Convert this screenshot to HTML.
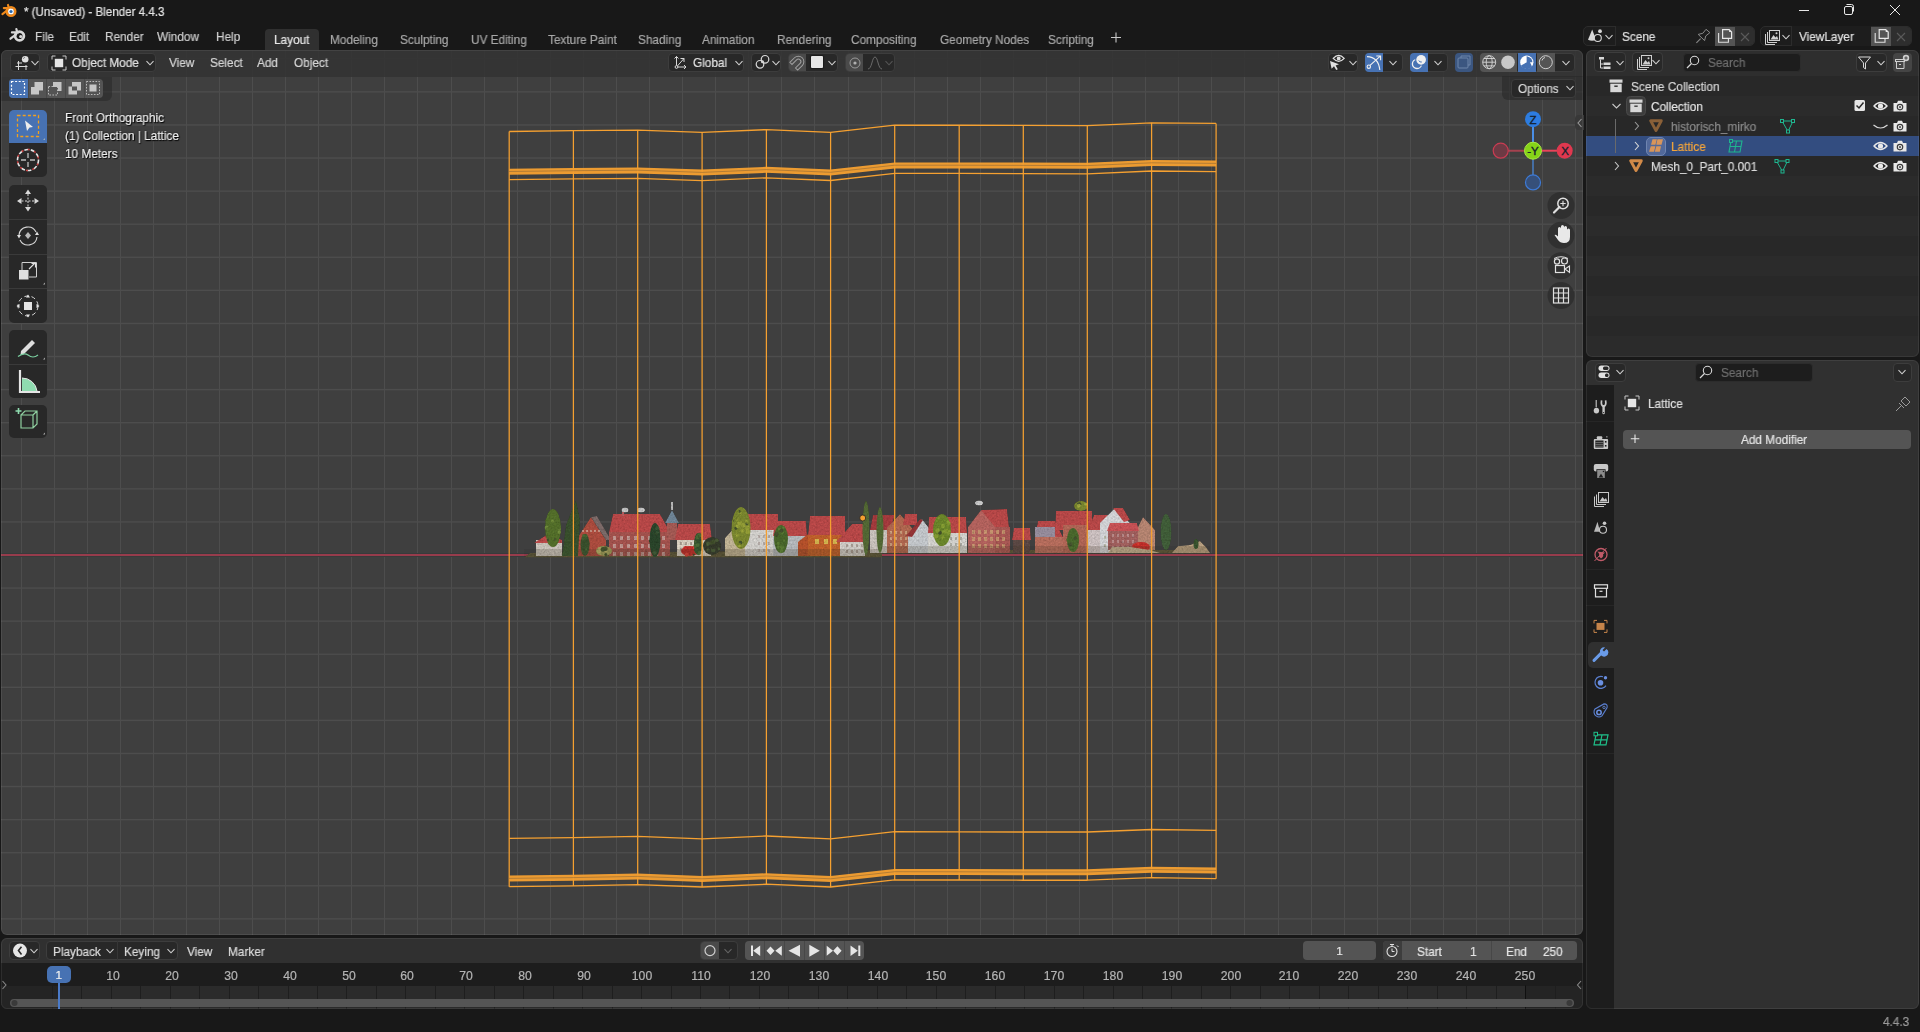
<!DOCTYPE html><html><head><meta charset="utf-8"><style>
*{box-sizing:border-box}
body{margin:0;width:1920px;height:1032px;background:#181818;position:relative;overflow:hidden;font-family:"Liberation Sans",sans-serif}
.a{position:absolute}
.t{position:absolute;white-space:pre;line-height:1;-webkit-text-stroke:0.2px currentColor;will-change:transform}
svg{position:absolute;overflow:visible}
</style></head><body>
<div class="a" style="left:1px;top:50px;width:1582px;height:885px;background:#3f3f3f;border-radius:6px;overflow:hidden">
<svg width="1582" height="885" style="left:0;top:0" fill="#4d4d4d"><rect x="20" y="0" width="1" height="885"/><rect x="53" y="0" width="1" height="885"/><rect x="86" y="0" width="1" height="885"/><rect x="119" y="0" width="1" height="885"/><rect x="152" y="0" width="1" height="885"/><rect x="185" y="0" width="1" height="885"/><rect x="218" y="0" width="1" height="885"/><rect x="251" y="0" width="1" height="885"/><rect x="284" y="0" width="1" height="885"/><rect x="317" y="0" width="1" height="885"/><rect x="350" y="0" width="1" height="885"/><rect x="383" y="0" width="1" height="885"/><rect x="416" y="0" width="1" height="885"/><rect x="450" y="0" width="1" height="885"/><rect x="483" y="0" width="1" height="885"/><rect x="516" y="0" width="1" height="885"/><rect x="549" y="0" width="1" height="885"/><rect x="582" y="0" width="1" height="885"/><rect x="615" y="0" width="1" height="885"/><rect x="648" y="0" width="1" height="885"/><rect x="681" y="0" width="1" height="885"/><rect x="714" y="0" width="1" height="885"/><rect x="747" y="0" width="1" height="885"/><rect x="780" y="0" width="1" height="885"/><rect x="813" y="0" width="1" height="885"/><rect x="847" y="0" width="1" height="885"/><rect x="880" y="0" width="1" height="885"/><rect x="913" y="0" width="1" height="885"/><rect x="946" y="0" width="1" height="885"/><rect x="979" y="0" width="1" height="885"/><rect x="1012" y="0" width="1" height="885"/><rect x="1045" y="0" width="1" height="885"/><rect x="1078" y="0" width="1" height="885"/><rect x="1111" y="0" width="1" height="885"/><rect x="1144" y="0" width="1" height="885"/><rect x="1177" y="0" width="1" height="885"/><rect x="1210" y="0" width="1" height="885"/><rect x="1243" y="0" width="1" height="885"/><rect x="1277" y="0" width="1" height="885"/><rect x="1310" y="0" width="1" height="885"/><rect x="1343" y="0" width="1" height="885"/><rect x="1376" y="0" width="1" height="885"/><rect x="1409" y="0" width="1" height="885"/><rect x="1442" y="0" width="1" height="885"/><rect x="1475" y="0" width="1" height="885"/><rect x="1508" y="0" width="1" height="885"/><rect x="1541" y="0" width="1" height="885"/><rect x="1574" y="0" width="1" height="885"/><rect x="0" y="8.10" width="1582" height="1.4"/><rect x="0" y="41.18" width="1582" height="1.4"/><rect x="0" y="74.26" width="1582" height="1.4"/><rect x="0" y="107.34" width="1582" height="1.4"/><rect x="0" y="140.42" width="1582" height="1.4"/><rect x="0" y="173.50" width="1582" height="1.4"/><rect x="0" y="206.58" width="1582" height="1.4"/><rect x="0" y="239.66" width="1582" height="1.4"/><rect x="0" y="272.74" width="1582" height="1.4"/><rect x="0" y="305.82" width="1582" height="1.4"/><rect x="0" y="338.90" width="1582" height="1.4"/><rect x="0" y="371.98" width="1582" height="1.4"/><rect x="0" y="405.06" width="1582" height="1.4"/><rect x="0" y="438.14" width="1582" height="1.4"/><rect x="0" y="471.22" width="1582" height="1.4"/><rect x="0" y="504.30" width="1582" height="1.4"/><rect x="0" y="537.38" width="1582" height="1.4"/><rect x="0" y="570.46" width="1582" height="1.4"/><rect x="0" y="603.54" width="1582" height="1.4"/><rect x="0" y="636.62" width="1582" height="1.4"/><rect x="0" y="669.70" width="1582" height="1.4"/><rect x="0" y="702.78" width="1582" height="1.4"/><rect x="0" y="735.86" width="1582" height="1.4"/><rect x="0" y="768.94" width="1582" height="1.4"/><rect x="0" y="802.02" width="1582" height="1.4"/><rect x="0" y="835.10" width="1582" height="1.4"/><rect x="0" y="868.18" width="1582" height="1.4"/></svg>
<div class="a" style="left:0;top:503px;width:1582px;height:4px;background:#383b3b"></div>
<div class="a" style="left:0;top:504px;width:1582px;height:2px;background:#973c4c"></div>
<svg width="1920" height="1032" style="left:-1px;top:-50px"><defs><filter id="vtex" x="500" y="480" width="740" height="90" filterUnits="userSpaceOnUse"><feTurbulence type="fractalNoise" baseFrequency="0.55" numOctaves="2" seed="7"/><feColorMatrix type="matrix" values="0.33 0.33 0.33 0 0 0.33 0.33 0.33 0 0 0.33 0.33 0.33 0 0 0 0 0 0 1" result="n"/><feComposite in="SourceGraphic" in2="n" operator="arithmetic" k1="1.15" k2="0.33" k3="0" k4="0" result="c"/><feComposite in="c" in2="SourceGraphic" operator="in" result="d"/><feGaussianBlur in="d" stdDeviation="0.5"/></filter></defs><g filter="url(#vtex)"><polygon fill="#5f5a3c" points="524,557.5 882,557.5 882,553.5 1210,553.5 1208,550 882,550 530,553"/><rect x="536" y="540" width="26" height="16" fill="#cfc8bf" fill-opacity="1"/><polygon fill="#bd4a4a" points="534,543 548,534 562,540 562,543"/><polygon fill="#b04e40" points="576,556 576,540 591,517 606,540 606,556"/><polygon fill="#7e6c6a" points="591,517 597,516 611,540 606,540"/><rect x="582" y="530" width="2" height="2" fill="#e0d0c0" fill-opacity="0.55"/><rect x="586" y="530" width="2" height="2" fill="#e0d0c0" fill-opacity="0.55"/><rect x="590" y="530" width="2" height="2" fill="#e0d0c0" fill-opacity="0.55"/><rect x="594" y="530" width="2" height="2" fill="#e0d0c0" fill-opacity="0.55"/><rect x="598" y="530" width="2" height="2" fill="#e0d0c0" fill-opacity="0.55"/><rect x="609" y="532" width="61" height="24" fill="#a85550" fill-opacity="1"/><polygon fill="#bd4a4a" points="609,532 613,514 660,514 670,532"/><rect x="613" y="536" width="3" height="4" fill="#d8d0c8" fill-opacity="0.55"/><rect x="620" y="536" width="3" height="4" fill="#d8d0c8" fill-opacity="0.55"/><rect x="627" y="536" width="3" height="4" fill="#d8d0c8" fill-opacity="0.55"/><rect x="634" y="536" width="3" height="4" fill="#d8d0c8" fill-opacity="0.55"/><rect x="641" y="536" width="3" height="4" fill="#d8d0c8" fill-opacity="0.55"/><rect x="648" y="536" width="3" height="4" fill="#d8d0c8" fill-opacity="0.55"/><rect x="655" y="536" width="3" height="4" fill="#d8d0c8" fill-opacity="0.55"/><rect x="662" y="536" width="3" height="4" fill="#d8d0c8" fill-opacity="0.55"/><rect x="613" y="544" width="3" height="4" fill="#d8d0c8" fill-opacity="0.55"/><rect x="620" y="544" width="3" height="4" fill="#d8d0c8" fill-opacity="0.55"/><rect x="627" y="544" width="3" height="4" fill="#d8d0c8" fill-opacity="0.55"/><rect x="634" y="544" width="3" height="4" fill="#d8d0c8" fill-opacity="0.55"/><rect x="641" y="544" width="3" height="4" fill="#d8d0c8" fill-opacity="0.55"/><rect x="648" y="544" width="3" height="4" fill="#d8d0c8" fill-opacity="0.55"/><rect x="655" y="544" width="3" height="4" fill="#d8d0c8" fill-opacity="0.55"/><rect x="662" y="544" width="3" height="4" fill="#d8d0c8" fill-opacity="0.55"/><rect x="613" y="552" width="3" height="4" fill="#d8d0c8" fill-opacity="0.55"/><rect x="620" y="552" width="3" height="4" fill="#d8d0c8" fill-opacity="0.55"/><rect x="627" y="552" width="3" height="4" fill="#d8d0c8" fill-opacity="0.55"/><rect x="634" y="552" width="3" height="4" fill="#d8d0c8" fill-opacity="0.55"/><rect x="641" y="552" width="3" height="4" fill="#d8d0c8" fill-opacity="0.55"/><rect x="648" y="552" width="3" height="4" fill="#d8d0c8" fill-opacity="0.55"/><rect x="655" y="552" width="3" height="4" fill="#d8d0c8" fill-opacity="0.55"/><rect x="662" y="552" width="3" height="4" fill="#d8d0c8" fill-opacity="0.55"/><ellipse cx="625" cy="510" rx="3.5" ry="2.5" fill="#c8c8c8" /><ellipse cx="641" cy="510" rx="4" ry="2.5" fill="#c8c8c8" /><rect x="622" y="512" width="2" height="4" fill="#b86060" fill-opacity="1"/><rect x="667" y="522" width="10" height="18" fill="#a85c56" fill-opacity="1"/><polygon fill="#71889a" points="665,523 672,510 679,523"/><rect x="671" y="502" width="2" height="8" fill="#bdbdbd" fill-opacity="1"/><rect x="677" y="538" width="34" height="18" fill="#dcd3c4" fill-opacity="1"/><polygon fill="#bd4a4a" points="675,540 678,524 710,524 712,540"/><rect x="680" y="542" width="2" height="3" fill="#8a7a70" fill-opacity="0.55"/><rect x="685" y="542" width="2" height="3" fill="#8a7a70" fill-opacity="0.55"/><rect x="690" y="542" width="2" height="3" fill="#8a7a70" fill-opacity="0.55"/><rect x="695" y="542" width="2" height="3" fill="#8a7a70" fill-opacity="0.55"/><rect x="700" y="542" width="2" height="3" fill="#8a7a70" fill-opacity="0.55"/><rect x="705" y="542" width="2" height="3" fill="#8a7a70" fill-opacity="0.55"/><rect x="680" y="548" width="2" height="3" fill="#8a7a70" fill-opacity="0.55"/><rect x="685" y="548" width="2" height="3" fill="#8a7a70" fill-opacity="0.55"/><rect x="690" y="548" width="2" height="3" fill="#8a7a70" fill-opacity="0.55"/><rect x="695" y="548" width="2" height="3" fill="#8a7a70" fill-opacity="0.55"/><rect x="700" y="548" width="2" height="3" fill="#8a7a70" fill-opacity="0.55"/><rect x="705" y="548" width="2" height="3" fill="#8a7a70" fill-opacity="0.55"/><ellipse cx="690" cy="551" rx="9" ry="5" fill="#c8302c" /><ellipse cx="691.9" cy="553.2" rx="2.113270991791975" ry="2.113270991791975" fill="#c8302c" /><ellipse cx="693.7" cy="554.8" rx="1.0406073195970607" ry="1.0406073195970607" fill="#44522e" /><ellipse cx="696.8" cy="552.3" rx="2.2612606884508715" ry="2.2612606884508715" fill="#e04438" /><ellipse cx="689.5" cy="548.7" rx="1.7612652029303026" ry="1.7612652029303026" fill="#c8302c" /><ellipse cx="686.6" cy="554.7" rx="2.0720156322807983" ry="2.0720156322807983" fill="#e04438" /><ellipse cx="694.5" cy="547.7" rx="1.8644335286525633" ry="1.8644335286525633" fill="#e04438" /><ellipse cx="685.6" cy="548.4" rx="2.375389552356295" ry="2.375389552356295" fill="#c8302c" /><polygon fill="#c4b698" points="725,556 725,538 735,527 758,538 758,556"/><rect x="745" y="530" width="33" height="26" fill="#d6d4d0" fill-opacity="1"/><polygon fill="#bd4a4a" points="745,530 748,514 778,514 778,530"/><rect x="758" y="535" width="2" height="3" fill="#9a8a86" fill-opacity="0.55"/><rect x="763" y="535" width="2" height="3" fill="#9a8a86" fill-opacity="0.55"/><rect x="768" y="535" width="2" height="3" fill="#9a8a86" fill-opacity="0.55"/><rect x="773" y="535" width="2" height="3" fill="#9a8a86" fill-opacity="0.55"/><rect x="758" y="542" width="2" height="3" fill="#9a8a86" fill-opacity="0.55"/><rect x="763" y="542" width="2" height="3" fill="#9a8a86" fill-opacity="0.55"/><rect x="768" y="542" width="2" height="3" fill="#9a8a86" fill-opacity="0.55"/><rect x="773" y="542" width="2" height="3" fill="#9a8a86" fill-opacity="0.55"/><rect x="758" y="549" width="2" height="3" fill="#9a8a86" fill-opacity="0.55"/><rect x="763" y="549" width="2" height="3" fill="#9a8a86" fill-opacity="0.55"/><rect x="768" y="549" width="2" height="3" fill="#9a8a86" fill-opacity="0.55"/><rect x="773" y="549" width="2" height="3" fill="#9a8a86" fill-opacity="0.55"/><rect x="773" y="536" width="34" height="20" fill="#b9bdc0" fill-opacity="1"/><polygon fill="#bd4a4a" points="773,536 775,521 806,521 807,536"/><polygon fill="#b8522c" points="798,556 798,542 808,534 817,542 817,556"/><rect x="808" y="535" width="37" height="21" fill="#c4622c" fill-opacity="1"/><polygon fill="#bd4a4a" points="808,535 810,516 845,516 845,535"/><rect x="815" y="539" width="4" height="5" fill="#d8b850" fill-opacity="1"/><rect x="824" y="539" width="4" height="5" fill="#d8b850" fill-opacity="1"/><rect x="833" y="539" width="4" height="5" fill="#d8b850" fill-opacity="1"/><rect x="840" y="538" width="25" height="18" fill="#d4d0ca" fill-opacity="1"/><polygon fill="#bd4a4a" points="836,542 852,524 866,524 866,542"/><rect x="846" y="544" width="2" height="3" fill="#8a7a70" fill-opacity="0.55"/><rect x="851" y="544" width="2" height="3" fill="#8a7a70" fill-opacity="0.55"/><rect x="856" y="544" width="2" height="3" fill="#8a7a70" fill-opacity="0.55"/><rect x="861" y="544" width="2" height="3" fill="#8a7a70" fill-opacity="0.55"/><rect x="846" y="550" width="2" height="3" fill="#8a7a70" fill-opacity="0.55"/><rect x="851" y="550" width="2" height="3" fill="#8a7a70" fill-opacity="0.55"/><rect x="856" y="550" width="2" height="3" fill="#8a7a70" fill-opacity="0.55"/><rect x="861" y="550" width="2" height="3" fill="#8a7a70" fill-opacity="0.55"/><polygon fill="#a83c3f" points="870,530 873,515 895,515 890,530"/><rect x="870" y="530" width="18" height="23" fill="#cdc6c0" fill-opacity="1"/><polygon fill="#b56a52" points="887,553 887,528 900,514 912,528 912,553"/><rect x="890" y="531" width="2" height="3" fill="#e0c8a0" fill-opacity="0.55"/><rect x="895" y="531" width="2" height="3" fill="#e0c8a0" fill-opacity="0.55"/><rect x="900" y="531" width="2" height="3" fill="#e0c8a0" fill-opacity="0.55"/><rect x="905" y="531" width="2" height="3" fill="#e0c8a0" fill-opacity="0.55"/><rect x="890" y="537" width="2" height="3" fill="#e0c8a0" fill-opacity="0.55"/><rect x="895" y="537" width="2" height="3" fill="#e0c8a0" fill-opacity="0.55"/><rect x="900" y="537" width="2" height="3" fill="#e0c8a0" fill-opacity="0.55"/><rect x="905" y="537" width="2" height="3" fill="#e0c8a0" fill-opacity="0.55"/><rect x="890" y="543" width="2" height="3" fill="#e0c8a0" fill-opacity="0.55"/><rect x="895" y="543" width="2" height="3" fill="#e0c8a0" fill-opacity="0.55"/><rect x="900" y="543" width="2" height="3" fill="#e0c8a0" fill-opacity="0.55"/><rect x="905" y="543" width="2" height="3" fill="#e0c8a0" fill-opacity="0.55"/><polygon fill="#bd4a4a" points="903,525 905,514 917,514 917,525"/><polygon fill="#c8ccd0" points="908,553 908,536 922,519 935,536 935,553"/><polygon fill="#983538" points="906,536 920,519 923,520 912,537"/><rect x="928" y="533" width="39" height="20" fill="#d8d7d3" fill-opacity="1"/><polygon fill="#bd4a4a" points="928,533 929,517 966,517 967,533"/><rect x="950" y="537" width="2" height="3" fill="#8a8a80" fill-opacity="0.55"/><rect x="955" y="537" width="2" height="3" fill="#8a8a80" fill-opacity="0.55"/><rect x="960" y="537" width="2" height="3" fill="#8a8a80" fill-opacity="0.55"/><rect x="950" y="543" width="2" height="3" fill="#8a8a80" fill-opacity="0.55"/><rect x="955" y="543" width="2" height="3" fill="#8a8a80" fill-opacity="0.55"/><rect x="960" y="543" width="2" height="3" fill="#8a8a80" fill-opacity="0.55"/><polygon fill="#b86560" points="968,553 968,527 981,510 995,520 995,553"/><polygon fill="#bd4a4a" points="981,510 1007,509 1009,527 995,527"/><rect x="995" y="527" width="15" height="26" fill="#ad5a56" fill-opacity="1"/><rect x="972" y="530" width="3" height="4" fill="#d8c080" fill-opacity="0.55"/><rect x="978" y="530" width="3" height="4" fill="#d8c080" fill-opacity="0.55"/><rect x="984" y="530" width="3" height="4" fill="#d8c080" fill-opacity="0.55"/><rect x="990" y="530" width="3" height="4" fill="#d8c080" fill-opacity="0.55"/><rect x="996" y="530" width="3" height="4" fill="#d8c080" fill-opacity="0.55"/><rect x="1002" y="530" width="3" height="4" fill="#d8c080" fill-opacity="0.55"/><rect x="972" y="537" width="3" height="4" fill="#d8c080" fill-opacity="0.55"/><rect x="978" y="537" width="3" height="4" fill="#d8c080" fill-opacity="0.55"/><rect x="984" y="537" width="3" height="4" fill="#d8c080" fill-opacity="0.55"/><rect x="990" y="537" width="3" height="4" fill="#d8c080" fill-opacity="0.55"/><rect x="996" y="537" width="3" height="4" fill="#d8c080" fill-opacity="0.55"/><rect x="1002" y="537" width="3" height="4" fill="#d8c080" fill-opacity="0.55"/><rect x="972" y="544" width="3" height="4" fill="#d8c080" fill-opacity="0.55"/><rect x="978" y="544" width="3" height="4" fill="#d8c080" fill-opacity="0.55"/><rect x="984" y="544" width="3" height="4" fill="#d8c080" fill-opacity="0.55"/><rect x="990" y="544" width="3" height="4" fill="#d8c080" fill-opacity="0.55"/><rect x="996" y="544" width="3" height="4" fill="#d8c080" fill-opacity="0.55"/><rect x="1002" y="544" width="3" height="4" fill="#d8c080" fill-opacity="0.55"/><ellipse cx="979" cy="503" rx="4" ry="2.5" fill="#d0d0d0" /><rect x="1013" y="537" width="17" height="16" fill="#5e4a46" fill-opacity="1"/><polygon fill="#bd4a4a" points="1012,540 1014,528 1030,528 1031,540"/><rect x="1035" y="537" width="28" height="16" fill="#bb705f" fill-opacity="1"/><polygon fill="#bd4a4a" points="1035,537 1038,521 1055,521 1063,537"/><rect x="1035" y="527" width="20" height="10" fill="#9a90a0" fill-opacity="1"/><polygon fill="#bd4a4a" points="1055,530 1056,511 1092,511 1092,530"/><ellipse cx="1081" cy="506" rx="7" ry="5" fill="#7d8a30" /><ellipse cx="1081.5" cy="507.6" rx="1.2866913203473098" ry="1.2866913203473098" fill="#7d8a30" /><ellipse cx="1085.7" cy="504.2" rx="1.5056659086113378" ry="1.5056659086113378" fill="#a0a840" /><ellipse cx="1078.6" cy="506.9" rx="1.0047363671240994" ry="1.0047363671240994" fill="#7d8a30" /><ellipse cx="1079.1" cy="504.3" rx="2.145925304505899" ry="2.145925304505899" fill="#44522e" /><ellipse cx="1078.8" cy="505.8" rx="1.9865367877972728" ry="1.9865367877972728" fill="#a0a840" /><rect x="1063" y="525" width="24" height="28" fill="#b56858" fill-opacity="1"/><rect x="1088" y="530" width="25" height="23" fill="#d0c4c4" fill-opacity="1"/><polygon fill="#bd4a4a" points="1088,530 1094,515 1110,515 1113,530"/><polygon fill="#d8d9dc" points="1100,553 1100,523 1115,508 1130,523 1130,553"/><polygon fill="#bd4a4a" points="1113,508 1123,508 1130,520 1124,522"/><rect x="1104" y="536" width="2" height="3" fill="#9a9a80" fill-opacity="0.55"/><rect x="1110" y="536" width="2" height="3" fill="#9a9a80" fill-opacity="0.55"/><rect x="1116" y="536" width="2" height="3" fill="#9a9a80" fill-opacity="0.55"/><rect x="1104" y="544" width="2" height="3" fill="#9a9a80" fill-opacity="0.55"/><rect x="1110" y="544" width="2" height="3" fill="#9a9a80" fill-opacity="0.55"/><rect x="1116" y="544" width="2" height="3" fill="#9a9a80" fill-opacity="0.55"/><polygon fill="#ba8874" points="1135,550 1135,533 1143,517 1155,530 1155,550"/><rect x="1108" y="530" width="30" height="20" fill="#a46260" fill-opacity="1"/><polygon fill="#cc5458" points="1107,531 1110,523 1137,523 1139,531"/><rect x="1112" y="534" width="2" height="3" fill="#d0b0b0" fill-opacity="0.55"/><rect x="1117" y="534" width="2" height="3" fill="#d0b0b0" fill-opacity="0.55"/><rect x="1122" y="534" width="2" height="3" fill="#d0b0b0" fill-opacity="0.55"/><rect x="1127" y="534" width="2" height="3" fill="#d0b0b0" fill-opacity="0.55"/><rect x="1132" y="534" width="2" height="3" fill="#d0b0b0" fill-opacity="0.55"/><rect x="1112" y="540" width="2" height="3" fill="#d0b0b0" fill-opacity="0.55"/><rect x="1117" y="540" width="2" height="3" fill="#d0b0b0" fill-opacity="0.55"/><rect x="1122" y="540" width="2" height="3" fill="#d0b0b0" fill-opacity="0.55"/><rect x="1127" y="540" width="2" height="3" fill="#d0b0b0" fill-opacity="0.55"/><rect x="1132" y="540" width="2" height="3" fill="#d0b0b0" fill-opacity="0.55"/><rect x="1112" y="546" width="2" height="3" fill="#d0b0b0" fill-opacity="0.55"/><rect x="1117" y="546" width="2" height="3" fill="#d0b0b0" fill-opacity="0.55"/><rect x="1122" y="546" width="2" height="3" fill="#d0b0b0" fill-opacity="0.55"/><rect x="1127" y="546" width="2" height="3" fill="#d0b0b0" fill-opacity="0.55"/><rect x="1132" y="546" width="2" height="3" fill="#d0b0b0" fill-opacity="0.55"/><ellipse cx="1141" cy="547" rx="9" ry="5" fill="#c8302c" /><ellipse cx="1144.8" cy="550.1" rx="1.0252945495299421" ry="1.0252945495299421" fill="#c8302c" /><ellipse cx="1139.0" cy="547.7" rx="1.0127097415473398" ry="1.0127097415473398" fill="#e04438" /><ellipse cx="1136.4" cy="549.3" rx="2.301517447436529" ry="2.301517447436529" fill="#c8302c" /><ellipse cx="1138.6" cy="545.7" rx="1.734582548970368" ry="1.734582548970368" fill="#c8302c" /><ellipse cx="1135.0" cy="549.2" rx="2.116117348627866" ry="2.116117348627866" fill="#c8302c" /><ellipse cx="1134.7" cy="545.6" rx="1.855158553329674" ry="1.855158553329674" fill="#c8302c" /><ellipse cx="1138.6" cy="550.8" rx="1.7632016519375344" ry="1.7632016519375344" fill="#e04438" /><ellipse cx="1138.2" cy="544.1" rx="1.1094747251088029" ry="1.1094747251088029" fill="#e04438" /><polygon fill="#bba383" points="1172,553 1178,546 1190,545 1200,541 1206,547 1210,553"/><polygon fill="#c8b594" points="1108,553 1112,547 1130,547 1150,550 1160,553"/><rect x="524" y="549" width="358" height="8" fill="#3a3020" fill-opacity="0.22"/><rect x="882" y="546" width="328" height="7.5" fill="#3a3020" fill-opacity="0.2"/><ellipse cx="553" cy="528" rx="8" ry="19" fill="#56722c" /><ellipse cx="559.6" cy="529.1" rx="1.5682432297211668" ry="1.5682432297211668" fill="#6f8a3a" /><ellipse cx="554.3" cy="539.2" rx="1.6379311420869307" ry="1.6379311420869307" fill="#44522e" /><ellipse cx="546.6" cy="527.8" rx="2.173800993635385" ry="2.173800993635385" fill="#6f8a3a" /><ellipse cx="554.8" cy="537.8" rx="1.1492828535761626" ry="1.1492828535761626" fill="#44522e" /><ellipse cx="548.2" cy="539.8" rx="1.4127380966967595" ry="1.4127380966967595" fill="#44522e" /><ellipse cx="559.5" cy="526.4" rx="1.68342259797733" ry="1.68342259797733" fill="#56722c" /><ellipse cx="552.7" cy="520.9" rx="1.5653051813140857" ry="1.5653051813140857" fill="#6f8a3a" /><ellipse cx="559.3" cy="532.3" rx="1.6990514309325702" ry="1.6990514309325702" fill="#6f8a3a" /><ellipse cx="547.4" cy="520.2" rx="2.0948265594790927" ry="2.0948265594790927" fill="#56722c" /><ellipse cx="551.1" cy="537.8" rx="2.0848573289660983" ry="2.0848573289660983" fill="#56722c" /><ellipse cx="555.2" cy="536.9" rx="1.5088044686841968" ry="1.5088044686841968" fill="#56722c" /><ellipse cx="550.0" cy="527.5" rx="2.0776464624206668" ry="2.0776464624206668" fill="#56722c" /><ellipse cx="550.2" cy="543.2" rx="1.9095690090217377" ry="1.9095690090217377" fill="#56722c" /><ellipse cx="546.4" cy="529.6" rx="1.3509692032357075" ry="1.3509692032357075" fill="#56722c" /><ellipse cx="552.5" cy="538.8" rx="1.9064117218784493" ry="1.9064117218784493" fill="#56722c" /><ellipse cx="550.9" cy="532.9" rx="2.032958293799469" ry="2.032958293799469" fill="#56722c" /><ellipse cx="551.0" cy="539.7" rx="2.2178757534456253" ry="2.2178757534456253" fill="#56722c" /><ellipse cx="553.2" cy="529.0" rx="1.2326416647293752" ry="1.2326416647293752" fill="#56722c" /><ellipse cx="558.9" cy="527.2" rx="1.9679958187816395" ry="1.9679958187816395" fill="#56722c" /><ellipse cx="556.1" cy="516.8" rx="2.0925202795171343" ry="2.0925202795171343" fill="#56722c" /><ellipse cx="555.3" cy="525.3" rx="1.873231930840693" ry="1.873231930840693" fill="#56722c" /><polygon fill="#3a522e" points="562,556 566,525 576,500 580,520 578,556"/><ellipse cx="585" cy="545" rx="4.5" ry="11" fill="#3a522e" /><ellipse cx="586.0" cy="549.4" rx="1.0386708220380425" ry="1.0386708220380425" fill="#4a6a36" /><ellipse cx="584.5" cy="548.0" rx="1.3066534300341903" ry="1.3066534300341903" fill="#3a522e" /><ellipse cx="586.0" cy="535.9" rx="1.6602197063838238" ry="1.6602197063838238" fill="#4a6a36" /><ellipse cx="583.6" cy="538.7" rx="1.2707041425082761" ry="1.2707041425082761" fill="#4a6a36" /><ellipse cx="584.7" cy="542.6" rx="1.8565115310308915" ry="1.8565115310308915" fill="#3a522e" /><ellipse cx="583.0" cy="553.0" rx="1.000924862107102" ry="1.000924862107102" fill="#44522e" /><ellipse cx="583.3" cy="543.2" rx="1.1611042139261771" ry="1.1611042139261771" fill="#3a522e" /><ellipse cx="584.0" cy="535.8" rx="1.8589897276605325" ry="1.8589897276605325" fill="#4a6a36" /><ellipse cx="585.3" cy="541.8" rx="1.813254733461652" ry="1.813254733461652" fill="#3a522e" /><ellipse cx="587.4" cy="543.4" rx="2.138185790102841" ry="2.138185790102841" fill="#3a522e" /><ellipse cx="604" cy="551" rx="8" ry="5" fill="#8e8c50" /><ellipse cx="602.2" cy="547.8" rx="1.8343126992571719" ry="1.8343126992571719" fill="#8e8c50" /><ellipse cx="605.5" cy="549.7" rx="2.25085379873456" ry="2.25085379873456" fill="#a8a060" /><ellipse cx="598.7" cy="551.6" rx="1.8612352546691375" ry="1.8612352546691375" fill="#a8a060" /><ellipse cx="605.8" cy="554.5" rx="1.5261876255339475" ry="1.5261876255339475" fill="#44522e" /><ellipse cx="600.3" cy="549.1" rx="2.3614364787311697" ry="2.3614364787311697" fill="#a8a060" /><ellipse cx="605.3" cy="548.8" rx="2.3733727873945516" ry="2.3733727873945516" fill="#44522e" /><ellipse cx="602.9" cy="549.4" rx="2.377987118292479" ry="2.377987118292479" fill="#44522e" /><ellipse cx="655" cy="540" rx="5.5" ry="17" fill="#2c462c" /><ellipse cx="653.0" cy="539.3" rx="1.1706404173678338" ry="1.1706404173678338" fill="#2c462c" /><ellipse cx="654.5" cy="533.7" rx="2.0943888156936787" ry="2.0943888156936787" fill="#2c462c" /><ellipse cx="650.4" cy="541.0" rx="1.3833026672963828" ry="1.3833026672963828" fill="#2c462c" /><ellipse cx="657.6" cy="532.2" rx="1.3747639162948695" ry="1.3747639162948695" fill="#3c5a38" /><ellipse cx="656.0" cy="539.2" rx="1.9028272793358134" ry="1.9028272793358134" fill="#2c462c" /><ellipse cx="657.3" cy="528.3" rx="2.0645581511888302" ry="2.0645581511888302" fill="#3c5a38" /><ellipse cx="655.3" cy="535.0" rx="1.4155510323031721" ry="1.4155510323031721" fill="#44522e" /><ellipse cx="654.7" cy="535.7" rx="2.0430240581757806" ry="2.0430240581757806" fill="#2c462c" /><ellipse cx="654.6" cy="552.7" rx="2.243116806167281" ry="2.243116806167281" fill="#44522e" /><ellipse cx="654.3" cy="542.3" rx="1.9914537037504834" ry="1.9914537037504834" fill="#2c462c" /><ellipse cx="654.8" cy="552.6" rx="1.5396624108106465" ry="1.5396624108106465" fill="#3c5a38" /><ellipse cx="658.3" cy="530.7" rx="1.4150280390018115" ry="1.4150280390018115" fill="#2c462c" /><ellipse cx="656.8" cy="537.9" rx="1.4009055130761294" ry="1.4009055130761294" fill="#2c462c" /><ellipse cx="698" cy="544" rx="4" ry="11" fill="#365430" /><ellipse cx="697.9" cy="545.0" rx="1.696754692212422" ry="1.696754692212422" fill="#4a6a36" /><ellipse cx="695.6" cy="545.7" rx="2.136552256852207" ry="2.136552256852207" fill="#4a6a36" /><ellipse cx="696.2" cy="550.3" rx="2.108450708449517" ry="2.108450708449517" fill="#365430" /><ellipse cx="699.4" cy="535.1" rx="2.1788876933701267" ry="2.1788876933701267" fill="#4a6a36" /><ellipse cx="699.0" cy="553.0" rx="1.997420712208637" ry="1.997420712208637" fill="#4a6a36" /><ellipse cx="696.6" cy="552.3" rx="1.2096220080280318" ry="1.2096220080280318" fill="#365430" /><ellipse cx="697.4" cy="537.3" rx="1.87136706485148" ry="1.87136706485148" fill="#4a6a36" /><ellipse cx="695.3" cy="541.6" rx="1.1008055164800479" ry="1.1008055164800479" fill="#4a6a36" /><ellipse cx="712" cy="546" rx="9" ry="9" fill="#363c2c" /><ellipse cx="713.2" cy="549.9" rx="2.229839966246543" ry="2.229839966246543" fill="#4a5a36" /><ellipse cx="711.0" cy="543.0" rx="1.8403046808035766" ry="1.8403046808035766" fill="#44522e" /><ellipse cx="718.7" cy="544.0" rx="1.078051708590428" ry="1.078051708590428" fill="#363c2c" /><ellipse cx="706.7" cy="548.1" rx="1.7081817448610899" ry="1.7081817448610899" fill="#363c2c" /><ellipse cx="712.8" cy="548.0" rx="1.3685454121862395" ry="1.3685454121862395" fill="#363c2c" /><ellipse cx="708.2" cy="550.1" rx="1.723793987670125" ry="1.723793987670125" fill="#4a5a36" /><ellipse cx="707.9" cy="543.9" rx="2.0314540501271567" ry="2.0314540501271567" fill="#4a5a36" /><ellipse cx="715.3" cy="548.5" rx="1.1193406984397452" ry="1.1193406984397452" fill="#363c2c" /><ellipse cx="713.4" cy="541.8" rx="2.227697308716847" ry="2.227697308716847" fill="#44522e" /><ellipse cx="709.3" cy="550.8" rx="1.0412453693072585" ry="1.0412453693072585" fill="#363c2c" /><ellipse cx="718.9" cy="548.9" rx="1.312323233853657" ry="1.312323233853657" fill="#4a5a36" /><ellipse cx="716.9" cy="540.2" rx="1.87471646313531" ry="1.87471646313531" fill="#4a5a36" /><ellipse cx="707.9" cy="543.3" rx="1.8592603175897535" ry="1.8592603175897535" fill="#4a5a36" /><ellipse cx="741" cy="528" rx="9.5" ry="21" fill="#7d8a30" /><ellipse cx="739.2" cy="514.3" rx="2.1635407261672412" ry="2.1635407261672412" fill="#7d8a30" /><ellipse cx="745.9" cy="525.5" rx="2.192206592165722" ry="2.192206592165722" fill="#44522e" /><ellipse cx="742.5" cy="530.8" rx="2.0362240378018472" ry="2.0362240378018472" fill="#98a238" /><ellipse cx="747.3" cy="527.3" rx="2.0644863165015326" ry="2.0644863165015326" fill="#98a238" /><ellipse cx="740.5" cy="542.7" rx="1.8672515324532934" ry="1.8672515324532934" fill="#44522e" /><ellipse cx="740.4" cy="512.9" rx="1.216542565187115" ry="1.216542565187115" fill="#98a238" /><ellipse cx="739.0" cy="523.7" rx="2.232479961645038" ry="2.232479961645038" fill="#98a238" /><ellipse cx="737.0" cy="519.6" rx="1.226152463633679" ry="1.226152463633679" fill="#98a238" /><ellipse cx="736.7" cy="527.3" rx="1.0449337130935328" ry="1.0449337130935328" fill="#7d8a30" /><ellipse cx="738.9" cy="544.6" rx="1.9627999486806949" ry="1.9627999486806949" fill="#7d8a30" /><ellipse cx="740.5" cy="544.8" rx="1.1650786049626027" ry="1.1650786049626027" fill="#7d8a30" /><ellipse cx="737.6" cy="534.6" rx="2.021017204158287" ry="2.021017204158287" fill="#98a238" /><ellipse cx="739.4" cy="545.9" rx="1.509954352324716" ry="1.509954352324716" fill="#98a238" /><ellipse cx="740.5" cy="519.8" rx="2.025286786191672" ry="2.025286786191672" fill="#7d8a30" /><ellipse cx="735.6" cy="518.2" rx="1.9410609371384715" ry="1.9410609371384715" fill="#7d8a30" /><ellipse cx="743.4" cy="525.4" rx="2.3656043349131624" ry="2.3656043349131624" fill="#98a238" /><ellipse cx="739.5" cy="510.8" rx="1.7677827892434124" ry="1.7677827892434124" fill="#7d8a30" /><ellipse cx="741.3" cy="522.3" rx="1.131340526067841" ry="1.131340526067841" fill="#98a238" /><ellipse cx="747.4" cy="527.7" rx="2.3100307081622704" ry="2.3100307081622704" fill="#98a238" /><ellipse cx="739.3" cy="511.4" rx="1.357602068534483" ry="1.357602068534483" fill="#44522e" /><ellipse cx="737.9" cy="511.0" rx="1.0526463771625605" ry="1.0526463771625605" fill="#7d8a30" /><ellipse cx="735.8" cy="528.3" rx="1.5633005281037269" ry="1.5633005281037269" fill="#44522e" /><ellipse cx="734.3" cy="521.0" rx="1.1511725822206351" ry="1.1511725822206351" fill="#44522e" /><ellipse cx="747.8" cy="531.7" rx="2.199473576413084" ry="2.199473576413084" fill="#98a238" /><ellipse cx="733.2" cy="529.5" rx="1.6811560421619778" ry="1.6811560421619778" fill="#7d8a30" /><ellipse cx="739.0" cy="532.7" rx="2.0158940793372278" ry="2.0158940793372278" fill="#7d8a30" /><ellipse cx="737.9" cy="526.1" rx="2.1569820150699845" ry="2.1569820150699845" fill="#98a238" /><ellipse cx="734.8" cy="520.9" rx="1.1226885429908917" ry="1.1226885429908917" fill="#7d8a30" /><ellipse cx="746.2" cy="520.9" rx="1.1817389365394655" ry="1.1817389365394655" fill="#98a238" /><ellipse cx="736.9" cy="512.3" rx="1.6001101550078205" ry="1.6001101550078205" fill="#7d8a30" /><ellipse cx="781" cy="539" rx="7" ry="14" fill="#4a682c" /><ellipse cx="783.4" cy="527.6" rx="1.2797955163914976" ry="1.2797955163914976" fill="#5c7e36" /><ellipse cx="779.5" cy="528.9" rx="1.5888091704043723" ry="1.5888091704043723" fill="#5c7e36" /><ellipse cx="784.0" cy="540.4" rx="2.2545259729048053" ry="2.2545259729048053" fill="#4a682c" /><ellipse cx="784.1" cy="540.9" rx="1.6190556421940037" ry="1.6190556421940037" fill="#4a682c" /><ellipse cx="782.8" cy="550.5" rx="2.019228257731168" ry="2.019228257731168" fill="#4a682c" /><ellipse cx="778.2" cy="546.9" rx="1.5353674306474858" ry="1.5353674306474858" fill="#5c7e36" /><ellipse cx="778.2" cy="543.4" rx="1.3997296724293382" ry="1.3997296724293382" fill="#5c7e36" /><ellipse cx="784.1" cy="540.4" rx="1.0384611932212646" ry="1.0384611932212646" fill="#5c7e36" /><ellipse cx="776.6" cy="535.4" rx="2.2037174102770924" ry="2.2037174102770924" fill="#4a682c" /><ellipse cx="782.3" cy="532.2" rx="1.6004645226556988" ry="1.6004645226556988" fill="#5c7e36" /><ellipse cx="782.0" cy="547.2" rx="2.0175664199598975" ry="2.0175664199598975" fill="#5c7e36" /><ellipse cx="781.4" cy="530.7" rx="1.9932080641511547" ry="1.9932080641511547" fill="#44522e" /><ellipse cx="776.5" cy="534.4" rx="2.28098820388026" ry="2.28098820388026" fill="#44522e" /><ellipse cx="780.2" cy="537.5" rx="2.0745013187466195" ry="2.0745013187466195" fill="#4a682c" /><ellipse cx="781.4" cy="550.8" rx="1.8344217077066058" ry="1.8344217077066058" fill="#5c7e36" /><ellipse cx="866" cy="528" rx="3.5" ry="27" fill="#566c36" /><ellipse cx="880" cy="530" rx="3.5" ry="23" fill="#566c36" /><ellipse cx="942" cy="530" rx="9" ry="16" fill="#6e8a2c" /><ellipse cx="946.8" cy="527.7" rx="1.0732358030273035" ry="1.0732358030273035" fill="#6e8a2c" /><ellipse cx="934.9" cy="532.2" rx="1.6747920080056748" ry="1.6747920080056748" fill="#6e8a2c" /><ellipse cx="940.4" cy="521.8" rx="1.387862617897911" ry="1.387862617897911" fill="#88a034" /><ellipse cx="943.0" cy="525.9" rx="2.0515121944199652" ry="2.0515121944199652" fill="#88a034" /><ellipse cx="939.7" cy="522.7" rx="2.3753888273864483" ry="2.3753888273864483" fill="#6e8a2c" /><ellipse cx="947.4" cy="533.4" rx="1.5612003273430681" ry="1.5612003273430681" fill="#88a034" /><ellipse cx="947.1" cy="529.7" rx="1.052841612184621" ry="1.052841612184621" fill="#88a034" /><ellipse cx="935.9" cy="536.3" rx="2.2602543628903016" ry="2.2602543628903016" fill="#88a034" /><ellipse cx="946.5" cy="524.9" rx="1.9560649652645328" ry="1.9560649652645328" fill="#6e8a2c" /><ellipse cx="943.9" cy="538.7" rx="1.5270094824145533" ry="1.5270094824145533" fill="#88a034" /><ellipse cx="942.2" cy="532.5" rx="1.2586353923273637" ry="1.2586353923273637" fill="#88a034" /><ellipse cx="939.1" cy="526.6" rx="1.6665435594612137" ry="1.6665435594612137" fill="#6e8a2c" /><ellipse cx="940.5" cy="543.9" rx="2.1417395056123523" ry="2.1417395056123523" fill="#6e8a2c" /><ellipse cx="944.9" cy="534.9" rx="1.7514059052264364" ry="1.7514059052264364" fill="#6e8a2c" /><ellipse cx="939.9" cy="532.7" rx="1.9512463813867043" ry="1.9512463813867043" fill="#44522e" /><ellipse cx="938.7" cy="517.8" rx="1.1221764838936317" ry="1.1221764838936317" fill="#88a034" /><ellipse cx="943.2" cy="537.5" rx="2.0002441091712333" ry="2.0002441091712333" fill="#88a034" /><ellipse cx="948.6" cy="523.5" rx="2.0024944821608797" ry="2.0024944821608797" fill="#88a034" /><ellipse cx="945.9" cy="534.9" rx="2.33967554584763" ry="2.33967554584763" fill="#6e8a2c" /><ellipse cx="944.9" cy="539.7" rx="2.034058428168513" ry="2.034058428168513" fill="#6e8a2c" /><ellipse cx="937.5" cy="530.5" rx="2.2545830694548243" ry="2.2545830694548243" fill="#88a034" /><ellipse cx="949.3" cy="531.3" rx="1.5507736307136262" ry="1.5507736307136262" fill="#88a034" /><ellipse cx="940.3" cy="520.7" rx="1.91433082476011" ry="1.91433082476011" fill="#6e8a2c" /><ellipse cx="948.3" cy="533.3" rx="1.5413299728475771" ry="1.5413299728475771" fill="#88a034" /><ellipse cx="944.9" cy="531.5" rx="2.0013660116293837" ry="2.0013660116293837" fill="#88a034" /><ellipse cx="947.9" cy="521.7" rx="1.4278117337551623" ry="1.4278117337551623" fill="#88a034" /><ellipse cx="1073" cy="540" rx="6" ry="12" fill="#4b6a2e" /><ellipse cx="1074.2" cy="548.6" rx="1.2343905769835717" ry="1.2343905769835717" fill="#4b6a2e" /><ellipse cx="1075.7" cy="534.1" rx="1.0877643331728033" ry="1.0877643331728033" fill="#4b6a2e" /><ellipse cx="1075.3" cy="538.2" rx="1.5955498090127789" ry="1.5955498090127789" fill="#44522e" /><ellipse cx="1077.1" cy="535.7" rx="1.3930481219157165" ry="1.3930481219157165" fill="#4b6a2e" /><ellipse cx="1073.6" cy="542.2" rx="1.2574288145256094" ry="1.2574288145256094" fill="#5e8036" /><ellipse cx="1074.0" cy="543.2" rx="1.9663155739173481" ry="1.9663155739173481" fill="#4b6a2e" /><ellipse cx="1068.5" cy="539.7" rx="2.168487770312029" ry="2.168487770312029" fill="#4b6a2e" /><ellipse cx="1071.1" cy="547.6" rx="1.903253863288323" ry="1.903253863288323" fill="#4b6a2e" /><ellipse cx="1070.2" cy="544.3" rx="2.1770070144306803" ry="2.1770070144306803" fill="#44522e" /><ellipse cx="1069.4" cy="542.5" rx="1.1468614384901779" ry="1.1468614384901779" fill="#4b6a2e" /><ellipse cx="1166" cy="532" rx="5.5" ry="18" fill="#42603a" /><ellipse cx="1196" cy="544" rx="2.5" ry="5" fill="#3a5630" /></g><line x1="509.2" y1="131.5" x2="509.2" y2="886.7" stroke="#f5a030" stroke-width="1.25"/><line x1="573.4" y1="130.7" x2="573.4" y2="885.9" stroke="#f5a030" stroke-width="1.25"/><line x1="637.7" y1="130.2" x2="637.7" y2="884.7" stroke="#f5a030" stroke-width="1.25"/><line x1="702.1" y1="132.4" x2="702.1" y2="887.1" stroke="#f5a030" stroke-width="1.25"/><line x1="766.4" y1="129.6" x2="766.4" y2="884.3" stroke="#f5a030" stroke-width="1.25"/><line x1="830.6" y1="132.3" x2="830.6" y2="887.1" stroke="#f5a030" stroke-width="1.25"/><line x1="894.7" y1="125.2" x2="894.7" y2="880.0" stroke="#f5a030" stroke-width="1.25"/><line x1="959.2" y1="125.2" x2="959.2" y2="880.1" stroke="#f5a030" stroke-width="1.25"/><line x1="1023.3" y1="125.4" x2="1023.3" y2="880.3" stroke="#f5a030" stroke-width="1.25"/><line x1="1087.3" y1="125.6" x2="1087.3" y2="880.3" stroke="#f5a030" stroke-width="1.25"/><line x1="1151.6" y1="122.8" x2="1151.6" y2="877.8" stroke="#f5a030" stroke-width="1.25"/><line x1="1216.1" y1="123.4" x2="1216.1" y2="878.7" stroke="#f5a030" stroke-width="1.25"/><polyline fill="none" stroke="#f5a030" stroke-width="1.35" stroke-opacity="1" stroke-linejoin="round" points="509.2,131.5 573.4,130.7 637.7,130.2 702.1,132.4 766.4,129.6 830.6,132.3 894.7,125.2 959.2,125.2 1023.3,125.4 1087.3,125.6 1151.6,122.8 1216.1,123.4"/><polygon fill="#f5a030" fill-opacity="0.95" points="509.2,168.7 573.4,167.9 637.7,167.4 702.1,169.6 766.4,166.8 830.6,169.5 894.7,162.4 959.2,162.4 1023.3,162.6 1087.3,162.8 1151.6,160.0 1216.1,160.6 1216.1,166.6 1151.6,166.0 1087.3,168.8 1023.3,168.6 959.2,168.4 894.7,168.4 830.6,175.5 766.4,172.8 702.1,175.6 637.7,173.4 573.4,173.9 509.2,174.7"/><polyline fill="none" stroke="#3d3d3d" stroke-width="0.6" stroke-opacity="0.55" stroke-linejoin="round" points="509.2,171.5 573.4,170.7 637.7,170.2 702.1,172.4 766.4,169.6 830.6,172.3 894.7,165.2 959.2,165.2 1023.3,165.4 1087.3,165.6 1151.6,162.8 1216.1,163.4"/><polyline fill="none" stroke="#f5a030" stroke-width="1.35" stroke-opacity="1" stroke-linejoin="round" points="509.2,179.7 573.4,178.9 637.7,178.4 702.1,180.6 766.4,177.8 830.6,180.5 894.7,173.4 959.2,173.4 1023.3,173.6 1087.3,173.8 1151.6,171.0 1216.1,171.6"/><polyline fill="none" stroke="#f5a030" stroke-width="1.35" stroke-opacity="1" stroke-linejoin="round" points="509.2,838.4 573.4,837.6 637.7,836.4 702.1,838.8 766.4,836.0 830.6,838.8 894.7,831.7 959.2,831.8 1023.3,832.0 1087.3,832.0 1151.6,829.5 1216.1,830.4"/><polygon fill="#f5a030" fill-opacity="0.95" points="509.2,875.6 573.4,874.8 637.7,873.6 702.1,876.0 766.4,873.2 830.6,876.0 894.7,868.9 959.2,869.0 1023.3,869.2 1087.3,869.2 1151.6,866.7 1216.1,867.6 1216.1,873.6 1151.6,872.7 1087.3,875.2 1023.3,875.2 959.2,875.0 894.7,874.9 830.6,882.0 766.4,879.2 702.1,882.0 637.7,879.6 573.4,880.8 509.2,881.6"/><polyline fill="none" stroke="#3d3d3d" stroke-width="0.6" stroke-opacity="0.55" stroke-linejoin="round" points="509.2,878.4 573.4,877.6 637.7,876.4 702.1,878.8 766.4,876.0 830.6,878.8 894.7,871.7 959.2,871.8 1023.3,872.0 1087.3,872.0 1151.6,869.5 1216.1,870.4"/><polyline fill="none" stroke="#f5a030" stroke-width="1.35" stroke-opacity="1" stroke-linejoin="round" points="509.2,886.6 573.4,885.8 637.7,884.6 702.1,887.0 766.4,884.2 830.6,887.0 894.7,879.9 959.2,880.0 1023.3,880.2 1087.3,880.2 1151.6,877.7 1216.1,878.6"/><circle cx="862.7" cy="518" r="3" fill="#f5a030" stroke="#222" stroke-width="0.8"/></svg>
</div>
<div class="a" style="left:1px;top:50px;width:1582px;height:27px;background:rgba(50,50,50,0.86);border-radius:0px;border-radius:6px 6px 0 0"></div><div class="a" style="left:10px;top:53px;width:30px;height:18.5px;background:#282828;border-radius:4px;border:1px solid #3d3d3d;"></div><svg width="20" height="18" style="left:13px;top:54px"><path d="M2.5,12.5 H14.5 M4,9 H9 M5.5,7 V16 M13,11 V16" stroke="#d8d8d8" stroke-width="1"/><circle cx="12.2" cy="5.2" r="3.3" fill="#e0e0e0"/><path d="M10.4,5 a2,2 0 0 1 1.7,-1.8" stroke="#666" stroke-width="0.7" fill="none"/></svg><svg width="12" height="8" style="left:28.5px;top:58.5px"><path d="M2.5,2.2 L6,5.8 L9.5,2.2" fill="none" stroke="#d0d0d0" stroke-width="1.1"/></svg><div class="a" style="left:47px;top:53px;width:109px;height:18.5px;background:#282828;border-radius:4px;border:1px solid #3d3d3d;"></div><svg width="16" height="16" style="left:50.5px;top:54.5px"><path d="M1,4.5 V1 H4.5 M11.5,1 H15 V4.5 M15,11.5 V15 H11.5 M4.5,15 H1 V11.5" stroke="#c8c8c8" stroke-width="1" fill="none"/><rect x="3.8" y="3.8" width="8.4" height="8.4" fill="#e6e6e6"/></svg><div class="t" style="left:72.2px;top:57.39px;font-size:12.33px;color:#e0e0e0;transform:scaleX(0.957);transform-origin:0 0;">Object Mode</div><svg width="12" height="8" style="left:144.2px;top:58.5px"><path d="M2.5,2.2 L6,5.8 L9.5,2.2" fill="none" stroke="#d0d0d0" stroke-width="1.1"/></svg><div class="t" style="left:169px;top:57.39px;font-size:12.33px;color:#d6d6d6;transform:scaleX(0.957);transform-origin:0 0;">View</div><div class="t" style="left:210px;top:57.39px;font-size:12.33px;color:#d6d6d6;transform:scaleX(0.957);transform-origin:0 0;">Select</div><div class="t" style="left:257px;top:57.39px;font-size:12.33px;color:#d6d6d6;transform:scaleX(0.957);transform-origin:0 0;">Add</div><div class="t" style="left:294px;top:57.39px;font-size:12.33px;color:#d6d6d6;transform:scaleX(0.957);transform-origin:0 0;">Object</div><div class="a" style="left:668px;top:53px;width:76px;height:18.5px;background:#282828;border-radius:4px;border:1px solid #3d3d3d;"></div><svg width="16" height="16" style="left:672px;top:54.5px" fill="none" stroke="#d8d8d8" stroke-width="1"><path d="M4.5,12 V1.5 M2.5,3.5 L4.5,1.5 L6.5,3.5 M4.5,12 H14 M12,10 L14,12 L12,14 M4.5,12 L12,3.5 M8.5,3.5 H12 V7"/><circle cx="4.5" cy="12" r="1.4" fill="#282828"/></svg><div class="t" style="left:693px;top:57.39px;font-size:12.33px;color:#e0e0e0;transform:scaleX(0.957);transform-origin:0 0;">Global</div><svg width="12" height="8" style="left:732.5px;top:58.5px"><path d="M2.5,2.2 L6,5.8 L9.5,2.2" fill="none" stroke="#d0d0d0" stroke-width="1.1"/></svg><div class="a" style="left:751px;top:53px;width:30px;height:18.5px;background:#282828;border-radius:4px;border:1px solid #3d3d3d;"></div><svg width="18" height="18" style="left:753px;top:53px" fill="none" stroke="#d8d8d8" stroke-width="1.2"><circle cx="7" cy="11.3" r="3.8"/><circle cx="12" cy="6.3" r="3.8"/><circle cx="9.5" cy="8.8" r="1.5" fill="#d8d8d8" stroke="none"/></svg><svg width="12" height="8" style="left:769.5px;top:58.5px"><path d="M2.5,2.2 L6,5.8 L9.5,2.2" fill="none" stroke="#d0d0d0" stroke-width="1.1"/></svg><div class="a" style="left:788px;top:53px;width:50px;height:18.5px;background:#282828;border-radius:4px;border:1px solid #3d3d3d;"></div><div class="a" style="left:789px;top:54px;width:17px;height:16.5px;background:#4a4a4a;border-radius:3px 0 0 3px"></div><svg width="18" height="18" style="left:788.5px;top:53px"><g transform="rotate(45 9 9)"><path d="M3.5,15 V8.5 A5.5,5.5 0 0 1 14.5,8.5 V15 H11.5 V8.5 A2.5,2.5 0 0 0 6.5,8.5 V15 Z" fill="none" stroke="#a0a0a0" stroke-width="1"/></g></svg><div class="a" style="left:811px;top:56px;width:12px;height:12px;background:#e6e6e6;border-radius:1px;box-shadow:0 0 1px 1px #1a1a1a"></div><svg width="12" height="8" style="left:825.5px;top:58.5px"><path d="M2.5,2.2 L6,5.8 L9.5,2.2" fill="none" stroke="#d0d0d0" stroke-width="1.1"/></svg><div class="a" style="left:845px;top:53px;width:50px;height:18.5px;background:#282828;border-radius:4px;border:1px solid #3d3d3d;"></div><div class="a" style="left:846px;top:54px;width:17px;height:16.5px;background:#4a4a4a;border-radius:3px 0 0 3px"></div><svg width="16" height="16" style="left:846.5px;top:54.5px"><circle cx="8" cy="8" r="5" fill="none" stroke="#9a9a9a" stroke-width="1"/><circle cx="8" cy="8" r="1.6" fill="#b0b0b0"/></svg><svg width="16" height="16" style="left:867px;top:54.5px"><path d="M1,14 C5,14 5,2 8,2 C11,2 11,14 15,14" fill="none" stroke="#6a6a6a" stroke-width="1"/></svg><svg width="12" height="8" style="left:883px;top:58.5px"><path d="M2.5,2.2 L6,5.8 L9.5,2.2" fill="none" stroke="#555" stroke-width="1.1"/></svg><div class="a" style="left:1328px;top:53px;width:30px;height:18.5px;background:#282828;border-radius:4px;border:1px solid #3d3d3d;"></div><svg width="18" height="18" style="left:1329px;top:53px"><path d="M1,8 L10,11.3 L6.6,12.4 L8.8,16.2 L7.2,17.1 L5,13.3 L2.6,15.8 Z" fill="#e0e0e0"/><path d="M4.2,5.4 Q9.7,-0.6 15.2,5.4 Q9.7,11.4 4.2,5.4 Z" fill="none" stroke="#e0e0e0" stroke-width="1.2"/><circle cx="9.7" cy="5.4" r="1.9" fill="#e0e0e0"/></svg><svg width="12" height="8" style="left:1346.5px;top:58.5px"><path d="M2.5,2.2 L6,5.8 L9.5,2.2" fill="none" stroke="#d0d0d0" stroke-width="1.1"/></svg><div class="a" style="left:1365px;top:53px;width:38px;height:18.5px;background:#282828;border-radius:4px;border:1px solid #3d3d3d;"></div><div class="a" style="left:1365px;top:53px;width:18px;height:18.5px;background:#4772b3;border-radius:4px 0 0 4px"></div><svg width="18" height="18" style="left:1365px;top:53px" fill="none" stroke="#f0f0f0" stroke-width="1.1"><path d="M2,3.6 Q13.5,4 14.8,17"/><path d="M5,12.4 L15.3,3.2 M11.3,3 H15.6 V7.3"/><circle cx="3.8" cy="13.7" r="1.7"/></svg><svg width="12" height="8" style="left:1387px;top:58.5px"><path d="M2.5,2.2 L6,5.8 L9.5,2.2" fill="none" stroke="#d0d0d0" stroke-width="1.1"/></svg><div class="a" style="left:1410px;top:53px;width:38px;height:18.5px;background:#282828;border-radius:4px;border:1px solid #3d3d3d;"></div><div class="a" style="left:1410px;top:53px;width:18px;height:18.5px;background:#4772b3;border-radius:4px 0 0 4px"></div><svg width="18" height="18" style="left:1410px;top:53px"><circle cx="7" cy="10.9" r="4.6" fill="none" stroke="#f0f0f0" stroke-width="1.3"/><circle cx="11.1" cy="6.8" r="5.4" fill="#f0f0f0" stroke="#4772b3" stroke-width="1.1"/><path d="M8.8,7.5 Q9.5,9.5 11.8,9" fill="none" stroke="#4772b3" stroke-width="1"/></svg><svg width="12" height="8" style="left:1432px;top:58.5px"><path d="M2.5,2.2 L6,5.8 L9.5,2.2" fill="none" stroke="#d0d0d0" stroke-width="1.1"/></svg><div class="a" style="left:1455px;top:53px;width:18px;height:18.5px;background:#3b5680;border-radius:4px;"></div><svg width="18" height="18" style="left:1455px;top:53px" fill="none" stroke="#6f86aa" stroke-width="1"><rect x="3" y="5" width="10" height="10" rx="1"/><path d="M6,5 V3 H15 V12 H13"/></svg><div class="a" style="left:1480px;top:53px;width:95px;height:18.5px;background:#282828;border-radius:4px;border:1px solid #3d3d3d;"></div><div class="a" style="left:1480px;top:53px;width:18.5px;height:18.5px;background:#545454;border-radius:4px 0 0 4px"></div><div class="a" style="left:1499px;top:53px;width:18px;height:18.5px;background:#545454"></div><div class="a" style="left:1518px;top:53px;width:18px;height:18.5px;background:#4772b3"></div><div class="a" style="left:1537px;top:53px;width:18px;height:18.5px;background:#545454"></div><svg width="80" height="18" style="left:1480px;top:53px"><g fill="none" stroke="#d8d8d8" stroke-width="0.9"><circle cx="9.2" cy="9.2" r="6.5"/><ellipse cx="9.2" cy="9.2" rx="3" ry="6.5"/><path d="M2.7,9.2 H15.7 M3.8,5.5 H14.6 M3.8,12.9 H14.6"/></g><circle cx="28" cy="9.2" r="6.8" fill="#c8c8c8"/><circle cx="46.8" cy="9.2" r="6.6" fill="#ffffff"/><path d="M46.8,2.6 V9.2 L41,12.5 A6.6,6.6 0 0 0 52,13.5 Z" fill="#4772b3"/><path d="M46.8,3.6 A5.6,5.6 0 0 1 52.4,9.2 L46.8,9.2 Z" fill="#4772b3"/><circle cx="65.8" cy="9.2" r="6.5" fill="none" stroke="#d0d0d0" stroke-width="1"/><path d="M62,7.5 a4,4 0 0 1 3,-3" stroke="#d0d0d0" fill="none" stroke-width="1"/></svg><svg width="12" height="8" style="left:1560px;top:58.5px"><path d="M2.5,2.2 L6,5.8 L9.5,2.2" fill="none" stroke="#d0d0d0" stroke-width="1.1"/></svg><div class="a" style="left:1px;top:77px;width:111px;height:24px;background:rgba(40,40,40,0.55);border-radius:0px;border-radius:0 0 6px 0"></div><div class="a" style="left:9px;top:79px;width:93.5px;height:18.5px;background:#545454;border-radius:4px;"></div><div class="a" style="left:9px;top:79px;width:18.5px;height:18.5px;background:#4772b3;border-radius:4px 0 0 4px"></div><div class="a" style="left:27.5px;top:79px;width:1px;height:18.5px;background:#484848"></div><div class="a" style="left:46px;top:79px;width:1px;height:18.5px;background:#484848"></div><div class="a" style="left:65px;top:79px;width:1px;height:18.5px;background:#484848"></div><div class="a" style="left:83.7px;top:79px;width:1px;height:18.5px;background:#484848"></div><svg width="100" height="20" style="left:9px;top:79px"><rect x="2.5" y="2.5" width="13" height="13" fill="none" stroke="#ffffff" stroke-width="1.2" stroke-dasharray="2,1.6"/><path d="M22,15.5 V8 H25.5 V3 H34 V11.5 H30 V15.5 Z" fill="#c6c6c6"/><rect x="39.5" y="7.5" width="9" height="8.5" fill="none" stroke="#c6c6c6" stroke-width="0.9" stroke-dasharray="1.6,1.4"/><path d="M44,8 H49 V12 H52.5 V3 H44 Z" fill="#c6c6c6"/><path d="M59.5,15.5 V7.5 H63 V3 H72 V11.5 H68 V15.5 Z" fill="#c6c6c6"/><rect x="63" y="7.5" width="5" height="4" fill="#545454"/><rect x="77.5" y="2.5" width="13" height="13" fill="none" stroke="#c6c6c6" stroke-width="0.9" stroke-dasharray="1.6,1.4"/><rect x="80.5" y="5.5" width="7" height="7" fill="#c6c6c6"/></svg><div class="a" style="left:9px;top:110px;width:38px;height:33px;background:#4772b3;border-radius:5px;border-radius:5px 5px 0 0"></div><div class="a" style="left:9px;top:143px;width:38px;height:34px;background:#282828;border-radius:0px;border-radius:0 0 5px 5px"></div><div class="a" style="left:9px;top:185px;width:38px;height:138px;background:#282828;border-radius:5px;"></div><div class="a" style="left:9px;top:330px;width:38px;height:68px;background:#282828;border-radius:5px;"></div><div class="a" style="left:9px;top:405px;width:38px;height:33px;background:#282828;border-radius:5px;"></div><div class="a" style="left:9px;top:218.5px;width:38px;height:1px;background:#3a3a3a"></div><div class="a" style="left:9px;top:253.5px;width:38px;height:1px;background:#3a3a3a"></div><div class="a" style="left:9px;top:288px;width:38px;height:1px;background:#3a3a3a"></div><div class="a" style="left:9px;top:363.5px;width:38px;height:1px;background:#3a3a3a"></div><svg width="60" height="450" style="left:0;top:0"><rect x="17.5" y="115.5" width="21" height="21" fill="none" stroke="#f0a020" stroke-width="1.3" stroke-dasharray="3,2.2"/><path d="M25,120.5 L33,127 L29.5,127.5 L27,131 Z" fill="#ececec"/><path d="M43,140 L45,138 L45,140 Z" fill="#9ab"/><circle cx="28" cy="160" r="10.5" fill="none" stroke="#e6e6e6" stroke-width="1.6" stroke-dasharray="4,2.5"/><circle cx="28" cy="160" r="10.5" fill="none" stroke="#c84040" stroke-width="1.6" stroke-dasharray="2,4.5" stroke-dashoffset="3"/><path d="M28,153 V158 M28,162 V167 M21,160 H26 M30,160 H35" stroke="#bdbdbd" stroke-width="1.3"/><g fill="#d8d8d8"><path d="M28,189.5 L25,194 H31 Z M28,211.5 L25,207 H31 Z M17,201 L21.5,198 V204 Z M39,201 L34.5,198 V204 Z"/></g><path d="M28,194 V207 M21.5,201 H34.5" stroke="#d8d8d8" stroke-width="1" stroke-dasharray="2,1.5"/><path d="M19,235 a9,9 0 0 1 17,-3 M37,237 a9,9 0 0 1 -17,3" fill="none" stroke="#d8d8d8" stroke-width="1.1"/><path d="M28,232 L31,235.5 L28,239 L25,235.5 Z" fill="#b8b8b8"/><path d="M17,235 L21,235 L19,238.5 Z M39,235 L35,235 L37,231.5 Z" fill="#e0e0e0"/><rect x="19" y="270" width="9.5" height="9.5" fill="#dedede"/><path d="M22,270 V262.5 H36.5 V277 H29" fill="none" stroke="#cfcfcf" stroke-width="1"/><path d="M29,269 L35,263 M31.5,263.5 H35.5 V267.5" fill="none" stroke="#e0e0e0" stroke-width="1.1"/><path d="M43,284.5 L45,282.5 V284.5 Z" fill="#aaa"/><circle cx="28" cy="306" r="10" fill="none" stroke="#d8d8d8" stroke-width="1" stroke-dasharray="4.2,3"/><rect x="24" y="302" width="8" height="8" fill="#e4e4e4"/><path d="M28,294.5 L26,297.5 H30 Z M28,317.5 L26,314.5 H30 Z M16.5,306 L19.5,304 V308 Z M39.5,306 L36.5,304 V308 Z" fill="#e4e4e4"/><path d="M21,351 L32,340 L35,343 L24,354 L20.5,355 Z" fill="#dedede"/><path d="M18,356.5 Q24,352 28,355 Q33,359 38,355" fill="none" stroke="#7bd0a0" stroke-width="1.2"/><path d="M43,359.5 L45,357.5 V359.5 Z" fill="#aaa"/><path d="M20,370 V392 H40" fill="none" stroke="#e6e6e6" stroke-width="2.2"/><path d="M22,378 a15,15 0 0 1 15,13 H22 Z" fill="#8fdcb0"/><path d="M22,378 a15,15 0 0 1 15,13" fill="none" stroke="#e6e6e6" stroke-width="1"/><path d="M21,415 L25,411 H37 V424 L33,428 H21 Z M21,415 H33 V428 M33,415 L37,411" fill="none" stroke="#8fd0a0" stroke-width="1.2"/><path d="M18.5,408 V414 M15.5,411 H21.5" stroke="#8fdcb0" stroke-width="1.6"/><path d="M43,434.5 L45,432.5 V434.5 Z" fill="#aaa"/></svg><div class="t" style="left:65px;top:111.89px;font-size:12.33px;color:#f0f0f0;transform:scaleX(0.957);transform-origin:0 0;text-shadow:0 0 2px #000,1px 1px 1px #000;">Front Orthographic</div><div class="t" style="left:65px;top:129.89px;font-size:12.33px;color:#f0f0f0;transform:scaleX(0.957);transform-origin:0 0;text-shadow:0 0 2px #000,1px 1px 1px #000;">(1) Collection | Lattice</div><div class="t" style="left:65px;top:147.89px;font-size:12.33px;color:#f0f0f0;transform:scaleX(0.957);transform-origin:0 0;text-shadow:0 0 2px #000,1px 1px 1px #000;">10 Meters</div><div class="a" style="left:1502px;top:76px;width:81px;height:24px;background:rgba(40,40,40,0.6);border-radius:0px;border-radius:0 0 0 6px"></div><div class="a" style="left:1511px;top:79px;width:65px;height:18.5px;background:#282828;border-radius:4px;border:1px solid #3d3d3d;"></div><div class="t" style="left:1518px;top:82.89px;font-size:12.33px;color:#dcdcdc;transform:scaleX(0.957);transform-origin:0 0;">Options</div><svg width="12" height="8" style="left:1564px;top:84px"><path d="M2.5,2.2 L6,5.8 L9.5,2.2" fill="none" stroke="#d0d0d0" stroke-width="1.1"/></svg><svg width="100" height="100" style="left:1483px;top:100px"><line x1="50" y1="50.7" x2="81.7" y2="50.7" stroke="#e8445a" stroke-width="2"/><line x1="50" y1="50.7" x2="50" y2="19.2" stroke="#4a8ee6" stroke-width="2"/><line x1="50" y1="50.7" x2="17.7" y2="50.7" stroke="#e8445a" stroke-width="2" stroke-opacity="0.6"/><line x1="50" y1="50.7" x2="50" y2="82.4" stroke="#4a8ee6" stroke-width="2" stroke-opacity="0.6"/><circle cx="17.7" cy="50.7" r="7.5" fill="#6d3a44" stroke="#c93c52" stroke-width="1.2"/><circle cx="50" cy="82.4" r="7.5" fill="#36507a" stroke="#3d7ad6" stroke-width="1.2"/><circle cx="50" cy="19.2" r="8" fill="#2d7ce0"/><circle cx="81.7" cy="50.7" r="8" fill="#e0384f"/><circle cx="50" cy="50.7" r="8.5" fill="#86d418" stroke="#a8e840" stroke-width="1"/><text x="50" y="23.5" font-size="11.5" text-anchor="middle" fill="#15202c" stroke="#15202c" stroke-width="0.35" font-family="Liberation Sans">Z</text><text x="82" y="55" font-size="11.5" text-anchor="middle" fill="#15202c" stroke="#15202c" stroke-width="0.35" font-family="Liberation Sans">X</text><text x="50" y="55" font-size="11.5" text-anchor="middle" fill="#15202c" stroke="#15202c" stroke-width="0.35" font-family="Liberation Sans">-Y</text></svg><svg width="40" height="120" style="left:1541px;top:185px"><circle cx="20" cy="20.4" r="13.5" fill="#2e2e2e" fill-opacity="0.85"/><circle cx="20" cy="50.3" r="13.5" fill="#2e2e2e" fill-opacity="0.85"/><circle cx="20" cy="80.7" r="13.5" fill="#2e2e2e" fill-opacity="0.85"/><circle cx="20" cy="110.5" r="13.5" fill="#2e2e2e" fill-opacity="0.85"/><circle cx="22" cy="18.5" r="5.2" fill="none" stroke="#e0e0e0" stroke-width="1.5"/><path d="M22,15.8 V21.2 M19.3,18.5 H24.7" stroke="#e0e0e0" stroke-width="1.1"/><path d="M18.5,22 L13,27.5" stroke="#e0e0e0" stroke-width="2.2" stroke-linecap="round"/><path d="M13.5,50 Q15,49 17,51.5 V43.5 Q17,42 18.5,42 Q20,42 20,43.5 V41.5 Q20,40 21.5,40 Q23,40 23,41.5 V42.5 Q23,41 24.5,41 Q26,41 26,42.5 V45 Q26,43.5 27.5,43.5 Q29,43.5 29,45 V52 Q29,58 23,58 Q19,58 17,55 Z" fill="#e8e8e8"/><circle cx="16" cy="76.5" r="2.6" fill="none" stroke="#e0e0e0" stroke-width="1.2"/><circle cx="23.5" cy="76" r="3" fill="none" stroke="#e0e0e0" stroke-width="1.2"/><path d="M13,73.5 Q20,70 27,73.5" fill="none" stroke="#e0e0e0" stroke-width="1"/><rect x="14.5" y="80.5" width="9" height="7" fill="none" stroke="#e0e0e0" stroke-width="1.2"/><path d="M24,84 L28.5,81 V87.5 Z" fill="none" stroke="#e0e0e0" stroke-width="1.1"/><g stroke="#e0e0e0" stroke-width="1.2" fill="none"><rect x="12.5" y="103" width="15" height="15"/><path d="M17.5,103 V118 M22.5,103 V118 M12.5,108 H27.5 M12.5,113 H27.5"/></g></svg><div class="a" style="left:1575px;top:115px;width:9px;height:15px;background:#383838;border-radius:4px 0 0 4px"></div><svg width="8" height="12" style="left:1576px;top:116.5px"><path d="M5.5,2 L2,6 L5.5,10" fill="none" stroke="#9a9a9a" stroke-width="1.1"/></svg>
<div class="a" style="left:1583px;top:26px;width:171.5px;height:20px;background:#1d1d1d;border-radius:5px;border:1px solid #2c2c2c;"></div><div class="a" style="left:1614.5px;top:26px;width:100px;height:20px;background:#1d1d1d;border-left:1px solid #2c2c2c"></div><div class="a" style="left:1714.5px;top:27px;width:20px;height:18.5px;background:#545454"></div><div class="a" style="left:1734.5px;top:27px;width:19px;height:18px;background:#2e2e2e;border-radius:0 4px 4px 0"></div><svg width="180" height="22" style="left:1583px;top:25px"><path d="M5,14.8 L9.2,4.5 L13,14.8 Q9,16.5 5,14.8 Z" fill="#d8d8d8"/><circle cx="17" cy="6.2" r="1.9" fill="#d8d8d8"/><circle cx="14.8" cy="13" r="3.5" fill="#1d1d1d" stroke="#d8d8d8" stroke-width="1.1"/></svg><svg width="12" height="8" style="left:1602.5px;top:32.5px"><path d="M2.5,2.2 L6,5.8 L9.5,2.2" fill="none" stroke="#d0d0d0" stroke-width="1.1"/></svg><div class="t" style="left:1622px;top:30.89px;font-size:12.33px;color:#e0e0e0;transform:scaleX(0.957);transform-origin:0 0;">Scene</div><svg width="180" height="22" style="left:1583px;top:25px"><path d="M113.4,17.8 L117.6,13.6" stroke="#8a8a8a" stroke-width="1.1"/><path d="M123,4.3 L126.9,7.6 L122.7,11 L121.6,15.6 L115.2,9.4 L119.8,8.3 Z" fill="none" stroke="#8a8a8a" stroke-width="1"/><path d="M135.6,8 V17.3 H145.4 V14" fill="none" stroke="#e0e0e0" stroke-width="1.1"/><path d="M139.6,4.6 H146.1 L148.6,7.1 V13.3 H139.6 Z" fill="#545454" stroke="#e8e8e8" stroke-width="1.2"/><path d="M146.1,4.6 L148.6,7.1 H146.1 Z" fill="#e8e8e8"/><path d="M158,8 L166,16 M166,8 L158,16" stroke="#5a5a5a" stroke-width="1.1"/></svg><div class="a" style="left:1760px;top:26px;width:151.5px;height:20px;background:#1d1d1d;border-radius:5px;border:1px solid #2c2c2c;"></div><div class="a" style="left:1791.3px;top:26px;width:80px;height:20px;background:#1d1d1d;border-left:1px solid #2c2c2c"></div><div class="a" style="left:1871.3px;top:27px;width:20px;height:18.5px;background:#545454"></div><div class="a" style="left:1891.3px;top:27px;width:19.5px;height:18px;background:#2e2e2e;border-radius:0 4px 4px 0"></div><svg width="160" height="22" style="left:1760px;top:25px"><g fill="none" stroke="#d0d0d0" stroke-width="1"><path d="M5.5,9 V19.5 H15 M7.5,7 V17.5 H17"/><rect x="9.5" y="5.5" width="10" height="10"/></g><path d="M10.5,14.5 L13.5,10 L15.5,12.5 L17,11 L18.5,14.5 Z" fill="#d0d0d0"/><circle cx="16.5" cy="8.2" r="1" fill="#d0d0d0"/><path d="M115.2,8 V17.3 H125.0 V14" fill="none" stroke="#e0e0e0" stroke-width="1.1"/><path d="M119.2,4.6 H125.7 L128.2,7.1 V13.3 H119.2 Z" fill="#545454" stroke="#e8e8e8" stroke-width="1.2"/><path d="M125.7,4.6 L128.2,7.1 H125.7 Z" fill="#e8e8e8"/><path d="M137,8 L145,16 M145,8 L137,16" stroke="#5a5a5a" stroke-width="1.1"/></svg><svg width="12" height="8" style="left:1779.5px;top:32.5px"><path d="M2.5,2.2 L6,5.8 L9.5,2.2" fill="none" stroke="#d0d0d0" stroke-width="1.1"/></svg><div class="t" style="left:1799px;top:30.89px;font-size:12.33px;color:#e0e0e0;transform:scaleX(0.957);transform-origin:0 0;">ViewLayer</div><div class="a" style="left:1586px;top:50px;width:333px;height:307px;background:#282828;border-radius:6px;overflow:hidden"><div class="a" style="left:0;top:0;width:333px;height:26px;background:#2e2e2e"></div><div class="a" style="left:0;top:46px;width:333px;height:20px;background:#2b2b2b"></div><div class="a" style="left:0;top:86px;width:333px;height:20px;background:#2b2b2b"></div><div class="a" style="left:0;top:126px;width:333px;height:20px;background:#2b2b2b"></div><div class="a" style="left:0;top:166px;width:333px;height:20px;background:#2b2b2b"></div><div class="a" style="left:0;top:206px;width:333px;height:20px;background:#2b2b2b"></div><div class="a" style="left:0;top:246px;width:333px;height:20px;background:#2b2b2b"></div><div class="a" style="left:0;top:286px;width:333px;height:20px;background:#2b2b2b"></div><div class="a" style="left:0;top:326px;width:333px;height:20px;background:#2b2b2b"></div><div class="a" style="left:0;top:366px;width:333px;height:20px;background:#2b2b2b"></div><div class="a" style="left:0;top:406px;width:333px;height:20px;background:#2b2b2b"></div><div class="a" style="left:0;top:86px;width:333px;height:20px;background:#334d80"></div></div><div class="a" style="left:1594px;top:52.3px;width:32px;height:19.5px;background:#282828;border-radius:4px;border:1px solid #3d3d3d;"></div><svg width="20" height="18" style="left:1596px;top:53.5px" fill="#d8d8d8"><rect x="3" y="3" width="5" height="2.5"/><path d="M4.5,5.5 V14 H7 M4.5,10 H7" stroke="#d8d8d8" stroke-width="1" fill="none"/><rect x="7.5" y="8.5" width="7" height="2.5"/><rect x="7.5" y="12.5" width="7" height="2.5"/></svg><svg width="12" height="8" style="left:1614px;top:58.5px"><path d="M2.5,2.2 L6,5.8 L9.5,2.2" fill="none" stroke="#d0d0d0" stroke-width="1.1"/></svg><div class="a" style="left:1631.5px;top:52.3px;width:31.5px;height:19.5px;background:#282828;border-radius:4px;border:1px solid #3d3d3d;"></div><svg width="20" height="18" style="left:1632.5px;top:53px"><g fill="none" stroke="#d0d0d0" stroke-width="1"><path d="M4.5,6 V16.5 H14 M6.5,4 V14.5 H16"/><rect x="8.5" y="2.5" width="10" height="10"/></g><path d="M9.5,11.5 L12.5,7 L14.5,9.5 L16,8 L17.5,11.5 Z" fill="#d0d0d0"/><circle cx="15.5" cy="5.2" r="1" fill="#d0d0d0"/></svg><svg width="12" height="8" style="left:1650px;top:58px"><path d="M2.5,2.2 L6,5.8 L9.5,2.2" fill="none" stroke="#d0d0d0" stroke-width="1.1"/></svg><div class="a" style="left:1682.5px;top:52.5px;width:118px;height:19.3px;background:#1d1d1d;border-radius:4px;border:1px solid #2c2c2c;"></div><svg width="16" height="16" style="left:1685px;top:54px"><circle cx="9.5" cy="6.5" r="4.2" fill="none" stroke="#d8d8d8" stroke-width="1.1"/><path d="M6.5,9.5 L2,14" stroke="#d8d8d8" stroke-width="1.2"/></svg><div class="t" style="left:1708px;top:57.39px;font-size:12.33px;color:#6e6e6e;transform:scaleX(0.957);transform-origin:0 0;">Search</div><div class="a" style="left:1855.5px;top:52.5px;width:31.5px;height:19.3px;background:#282828;border-radius:4px;border:1px solid #3d3d3d;"></div><svg width="16" height="16" style="left:1857px;top:54.5px"><path d="M1.5,2 H13.5 L8.5,8 V14 L6.5,12.5 V8 Z" fill="none" stroke="#d8d8d8" stroke-width="1"/></svg><svg width="12" height="8" style="left:1874.5px;top:58.5px"><path d="M2.5,2.2 L6,5.8 L9.5,2.2" fill="none" stroke="#d0d0d0" stroke-width="1.1"/></svg><div class="a" style="left:1893px;top:52.5px;width:18.5px;height:19.3px;background:#454545;border-radius:4px;"></div><svg width="18" height="18" style="left:1893px;top:53px"><g fill="none" stroke="#cfcfcf" stroke-width="1"><rect x="2.5" y="6.5" width="9" height="2"/><path d="M3.5,8.5 V15.5 H11 V8.5"/><path d="M6,11.5 H8"/></g><circle cx="13" cy="5" r="3.2" fill="#cfcfcf"/><path d="M13,3.3 V6.7 M11.3,5 H14.7" stroke="#454545" stroke-width="1"/></svg><svg width="333" height="130" style="left:1586px;top:50px"><rect x="23.5" y="29.5" width="13" height="3.2" fill="#d8d8d8"/><rect x="24.3" y="33.7" width="11.4" height="8.5" fill="#d8d8d8"/><rect x="28.3" y="35.5" width="3.4" height="1.4" fill="#282828"/><path d="M26.5,54 L30.5,58 L34.5,54" fill="none" stroke="#c8c8c8" stroke-width="1.1"/><rect x="40.5" y="46.5" width="19" height="19" rx="4" fill="#3c3c3c" stroke="#4a4a4a" stroke-width="1"/><rect x="43.5" y="49.5" width="13" height="3.2" fill="#d8d8d8"/><rect x="44.3" y="53.7" width="11.4" height="8.5" fill="#d8d8d8"/><rect x="48.3" y="55.5" width="3.4" height="1.4" fill="#3c3c3c"/><rect x="268.5" y="50" width="10.5" height="11" rx="1.5" fill="#e6e6e6"/><path d="M270.5,55.5 L273,58 L277.5,52.5" fill="none" stroke="#282828" stroke-width="1.5"/><path d="M288.0,56 Q294.5,49 301.0,56 Q294.5,63 288.0,56 Z" fill="none" stroke="#e8e8e8" stroke-width="1.4"/><circle cx="294.5" cy="56" r="2.6" fill="#e8e8e8"/><path d="M307.5,52.9 H311 L312,50.7 H316 L317,52.9 H320.5 V61.4 H307.5 Z" fill="#e8e8e8"/><circle cx="314" cy="57.1" r="3.3" fill="#3a3a3a"/><circle cx="314" cy="57.1" r="2.2" fill="#e8e8e8"/><circle cx="314" cy="57.1" r="1.1" fill="#555"/><line x1="29.5" y1="69" x2="29.5" y2="103" stroke="#6a6a6a" stroke-width="1"/><path d="M49,72 L52.5,76 L49,80" fill="none" stroke="#9a9a9a" stroke-width="1.1"/><path d="M64.7,70.8 H75.3 L70,80.6 Z" fill="none" stroke="#8a6038" stroke-width="2.9" stroke-linejoin="round"/><path d="M287.5,75 Q294.5,81 301.5,75" fill="none" stroke="#d8d8d8" stroke-width="1.2"/><path d="M307.5,72.9 H311 L312,70.7 H316 L317,72.9 H320.5 V81.4 H307.5 Z" fill="#e8e8e8"/><circle cx="314" cy="77.1" r="3.3" fill="#3a3a3a"/><circle cx="314" cy="77.1" r="2.2" fill="#e8e8e8"/><circle cx="314" cy="77.1" r="1.1" fill="#555"/><path d="M196,71 H207 L202,81.5 Z" fill="none" stroke="#1fb58f" stroke-width="1"/><g fill="#282828" stroke="#1fb58f" stroke-width="1"><rect x="194.5" y="69.5" width="3" height="3"/><rect x="205.5" y="69.5" width="3" height="3"/><rect x="200.5" y="80" width="3" height="3"/></g><path d="M49,92 L52.5,96 L49,100" fill="none" stroke="#d8d8d8" stroke-width="1.1"/><rect x="60.5" y="87.5" width="19" height="18" rx="4.5" fill="#52699a" stroke="#6f85b0" stroke-width="1"/><g fill="#d8955a"><path d="M66.5,89.3 H70.9 L69.4,94.8 H65 Z M71.4,89.3 H77 L75.5,94.8 H70.3 Z M64.8,96.2 H69.4 L68,101.75 H63 Z M70.3,96.2 H75 L73.8,101.75 H68.8 Z"/></g><g fill="none" stroke="#1fb58f" stroke-width="1.1"><path d="M145,91 H156 L154,102 H143 Z M144,96.5 H155 M150.5,91 L148.5,102"/></g><rect x="143.5" y="89.5" width="3" height="3" fill="#334d80" stroke="#1fb58f" stroke-width="1"/><path d="M288.0,96 Q294.5,89 301.0,96 Q294.5,103 288.0,96 Z" fill="none" stroke="#e8e8e8" stroke-width="1.4"/><circle cx="294.5" cy="96" r="2.6" fill="#e8e8e8"/><path d="M307.5,92.9 H311 L312,90.7 H316 L317,92.9 H320.5 V101.4 H307.5 Z" fill="#e8e8e8"/><circle cx="314" cy="97.1" r="3.3" fill="#3a3a3a"/><circle cx="314" cy="97.1" r="2.2" fill="#e8e8e8"/><circle cx="314" cy="97.1" r="1.1" fill="#555"/><path d="M29,112 L32.5,116 L29,120" fill="none" stroke="#c8c8c8" stroke-width="1.1"/><path d="M44.7,110.8 H55.3 L50,120.6 Z" fill="none" stroke="#d28a48" stroke-width="2.9" stroke-linejoin="round"/><path d="M190.5,111 H201.5 L196.5,121.5 Z" fill="none" stroke="#1fb58f" stroke-width="1"/><g fill="#282828" stroke="#1fb58f" stroke-width="1"><rect x="189.0" y="109.5" width="3" height="3"/><rect x="200.0" y="109.5" width="3" height="3"/><rect x="195.0" y="120" width="3" height="3"/></g><path d="M288.0,116 Q294.5,109 301.0,116 Q294.5,123 288.0,116 Z" fill="none" stroke="#e8e8e8" stroke-width="1.4"/><circle cx="294.5" cy="116" r="2.6" fill="#e8e8e8"/><path d="M307.5,112.9 H311 L312,110.7 H316 L317,112.9 H320.5 V121.4 H307.5 Z" fill="#e8e8e8"/><circle cx="314" cy="117.1" r="3.3" fill="#3a3a3a"/><circle cx="314" cy="117.1" r="2.2" fill="#e8e8e8"/><circle cx="314" cy="117.1" r="1.1" fill="#555"/></svg><div class="t" style="left:1630.5px;top:81.39px;font-size:12.33px;color:#d8d8d8;transform:scaleX(0.957);transform-origin:0 0;">Scene Collection</div><div class="t" style="left:1650.5px;top:101.39px;font-size:12.33px;color:#e6e6e6;transform:scaleX(0.957);transform-origin:0 0;">Collection</div><div class="t" style="left:1670.5px;top:121.39px;font-size:12.33px;color:#8a8a8a;transform:scaleX(0.957);transform-origin:0 0;">historisch_mirko</div><div class="t" style="left:1670.5px;top:141.39px;font-size:12.33px;color:#f5a53a;transform:scaleX(0.957);transform-origin:0 0;">Lattice</div><div class="t" style="left:1650.5px;top:161.39px;font-size:12.33px;color:#dcdcdc;transform:scaleX(0.957);transform-origin:0 0;">Mesh_0_Part_0.001</div><div class="a" style="left:1586px;top:360px;width:333px;height:649px;background:#303030;border-radius:6px;overflow:hidden"><div class="a" style="left:0;top:25px;width:28px;height:624px;background:#1d1d1d"></div><div class="a" style="left:2px;top:282px;width:26px;height:25.5px;background:#303030;border-radius:5px 0 0 5px"></div><div class="a" style="left:0;top:61px;width:28px;height:1px;background:#262626"></div><div class="a" style="left:0;top:209px;width:28px;height:1px;background:#262626"></div><div class="a" style="left:0;top:245px;width:28px;height:1px;background:#262626"></div><div class="a" style="left:0;top:393px;width:28px;height:1px;background:#262626"></div></div><div class="a" style="left:1594.5px;top:362.5px;width:31.5px;height:19px;background:#282828;border-radius:4px;border:1px solid #3d3d3d;"></div><svg width="20" height="18" style="left:1597px;top:363px"><rect x="1.5" y="2.5" width="11" height="5.5" rx="2.75" fill="#e0e0e0"/><rect x="6" y="3.5" width="5.5" height="3.5" rx="1.5" fill="#282828"/><rect x="1.5" y="9.5" width="11" height="5.5" rx="2.75" fill="#e0e0e0"/><rect x="8" y="10.5" width="3.5" height="3.5" rx="1.5" fill="#282828"/></svg><svg width="12" height="8" style="left:1613.5px;top:368px"><path d="M2.5,2.2 L6,5.8 L9.5,2.2" fill="none" stroke="#d0d0d0" stroke-width="1.1"/></svg><div class="a" style="left:1695px;top:362.5px;width:117.5px;height:19px;background:#1d1d1d;border-radius:4px;border:1px solid #2c2c2c;"></div><svg width="16" height="16" style="left:1698px;top:363.5px"><circle cx="9.5" cy="6.5" r="4.2" fill="none" stroke="#d8d8d8" stroke-width="1.1"/><path d="M6.5,9.5 L2,14" stroke="#d8d8d8" stroke-width="1.2"/></svg><div class="t" style="left:1720.5px;top:366.89px;font-size:12.33px;color:#6e6e6e;transform:scaleX(0.957);transform-origin:0 0;">Search</div><div class="a" style="left:1892.5px;top:362.5px;width:19px;height:19px;background:#282828;border-radius:4px;border:1px solid #3d3d3d;"></div><svg width="12" height="8" style="left:1896px;top:368px"><path d="M2.5,2.2 L6,5.8 L9.5,2.2" fill="none" stroke="#d0d0d0" stroke-width="1.1"/></svg><svg width="20" height="20" style="left:1624px;top:395px"><path d="M1,4.5 V1 H4.5 M11.5,1 H15 V4.5 M15,11.5 V15 H11.5 M4.5,15 H1 V11.5" stroke="#c8c8c8" stroke-width="1" fill="none"/><rect x="3.8" y="3.8" width="8.4" height="8.4" fill="#e6e6e6"/></svg><div class="t" style="left:1648.3px;top:397.99px;font-size:12.33px;color:#e0e0e0;transform:scaleX(0.957);transform-origin:0 0;">Lattice</div><svg width="18" height="18" style="left:1894px;top:395px"><path d="M2,16 L7,11 M5,8 L10,13 M7,6 L11,2 L16,7 L12,11 Z" fill="none" stroke="#9a9a9a" stroke-width="1"/></svg><div class="a" style="left:1623px;top:430px;width:288px;height:18.5px;background:#545454;border-radius:4px;"></div><svg width="12" height="12" style="left:1629.5px;top:433px"><path d="M5,1.5 V10 M0.8,5.7 H9.3" stroke="#e8e8e8" stroke-width="1.1"/></svg><div class="t" style="left:1741px;top:433.99px;font-size:12.33px;color:#e6e6e6;transform:scaleX(0.957);transform-origin:0 0;">Add Modifier</div><svg width="30" height="380" style="left:1586px;top:385px"><path d="M10.2,15 V22.3" stroke="#c8c8c8" stroke-width="1.1"/><ellipse cx="10.4" cy="25.6" rx="2.7" ry="2.9" fill="#c8c8c8"/><path d="M15.6,15.3 Q14.6,20.5 17.6,21.3 Q20.6,20.5 19.6,15.3" fill="none" stroke="#c8c8c8" stroke-width="1.7"/><rect x="16.4" y="20" width="2.4" height="9.2" rx="1.2" fill="#c8c8c8"/><circle cx="17.6" cy="27.6" r="0.6" fill="#1d1d1d"/><rect x="7.8" y="53.9" width="14.3" height="10.1" rx="1" fill="#c8c8c8"/><rect x="10.8" y="51.2" width="5.5" height="3" rx="1" fill="#c8c8c8"/><rect x="20" y="51.5" width="1.6" height="0.8" fill="#c8c8c8"/><rect x="9.3" y="55.5" width="8.2" height="7" fill="#1d1d1d"/><path d="M9.3,57.4 H17.5 M9.3,59.3 H17.5 M9.3,61.2 H17.5" stroke="#8a8a8a" stroke-width="0.8"/><rect x="18.9" y="56" width="1.6" height="1.6" fill="#1d1d1d"/><rect x="18.9" y="60" width="1.6" height="1.6" fill="#1d1d1d"/><rect x="7.8" y="79" width="14.4" height="7.5" rx="2" fill="#c8c8c8"/><rect x="10.4" y="84.2" width="9.2" height="9.6" fill="#1d1d1d"/><rect x="11.2" y="85" width="7.6" height="8" fill="#8c8c8c"/><path d="M12.6,92.5 L15,88.8 L17.4,92.5 Z" fill="#1d1d1d"/><rect x="16.8" y="85.8" width="1.3" height="1.3" fill="#1d1d1d"/><g fill="none" stroke="#c8c8c8" stroke-width="1"><path d="M8.5,111.5 V121.5 H18 M10.5,109.5 V119.5 H20"/><rect x="12.5" y="107.5" width="10" height="10"/></g><path d="M13.5,116.5 L16.5,112 L18.5,114.5 L20,113 L21.5,116.5 Z" fill="#c8c8c8"/><path d="M8,146.79999999999995 L11.5,136.79999999999995 L14,146.79999999999995 Z" fill="#b8b8b8"/><circle cx="18.5" cy="138.29999999999995" r="1.8" fill="#c8c8c8"/><circle cx="17" cy="144.79999999999995" r="3.5" fill="#1d1d1d" stroke="#c8c8c8" stroke-width="1.1"/><circle cx="15" cy="169.5" r="6" fill="none" stroke="#c05a68" stroke-width="1.3"/><path d="M11,166.5 Q14,168.5 13,171.5 L15,173.5 Q18,171.5 17,169.5 L19,167.5" fill="#c05a68"/><path d="M8.5,176.0 L20.5,163.0" stroke="#c05a68" stroke-width="1"/><g fill="none" stroke="#e0e0e0" stroke-width="1.2"><rect x="8.5" y="199.79999999999995" width="13" height="3.5"/><path d="M9.5,203.29999999999995 V211.79999999999995 H20.5 V203.29999999999995"/><path d="M13.5,206.29999999999995 H16.5"/></g><path d="M8,238.39999999999998 V235.39999999999998 H11 M18,235.39999999999998 H21 V238.39999999999998 M21,244.39999999999998 V247.39999999999998 H18 M11,247.39999999999998 H8 V244.39999999999998" fill="none" stroke="#c6844a" stroke-width="1"/><rect x="10.5" y="237.89999999999998" width="8" height="7" fill="#c6844a"/><path d="M8,275.4 L15,268.4" stroke="#6a9be8" stroke-width="3" stroke-linecap="round"/><path d="M14,267.4 A4.2,4.2 0 1 0 20.5,263.9 L18,266.4 L16.5,264.9 L19,262.4 A4.2,4.2 0 0 0 14,267.4 Z" fill="#6a9be8"/><path d="M17,291.70000000000005 A6,6 0 1 0 20,300.70000000000005" fill="none" stroke="#5a7fd0" stroke-width="1.2"/><circle cx="14.5" cy="297.70000000000005" r="2.8" fill="#6a8fe0"/><circle cx="19.5" cy="292.70000000000005" r="1.7" fill="#6a8fe0"/><path d="M10,330.9 A5,5 0 0 1 9,323.9 L18,318.9 Q22,318.9 21,322.9 L16,330.9 A5,5 0 0 1 10,330.9 Z" fill="none" stroke="#5a7fd0" stroke-width="1.1"/><circle cx="13" cy="327.4" r="2.2" fill="none" stroke="#6a8fe0" stroke-width="1.5"/><circle cx="18" cy="322.4" r="1.2" fill="none" stroke="#6a8fe0" stroke-width="0.8"/><g fill="none" stroke="#1fc08a" stroke-width="1.2"><path d="M10,349.79999999999995 H22 L20,359.79999999999995 H8 Z M9,354.79999999999995 H21 M16,349.79999999999995 L14,359.79999999999995"/></g><rect x="8" y="347.29999999999995" width="3.5" height="3.5" fill="#1d1d1d" stroke="#1fc08a" stroke-width="1"/></svg><div class="a" style="left:1px;top:938px;width:1582px;height:71px;background:#2b2b2b;border-radius:6px;overflow:hidden"><div class="a" style="left:0;top:0;width:1582px;height:24.5px;background:#303030"></div><div class="a" style="left:0;top:24.5px;width:1582px;height:23px;background:#1d1d1d"></div><div class="a" style="left:0;top:47.5px;width:59px;height:24px;background:#242424"></div><div class="a" style="left:1524.5px;top:47.5px;width:58px;height:24px;background:#242424"></div><svg width="1582" height="71" style="left:0;top:0"><rect x="51" y="47.5" width="1" height="23.5" fill="#1e1e1e"/><rect x="80" y="47.5" width="1" height="23.5" fill="#1e1e1e"/><rect x="110" y="47.5" width="1" height="23.5" fill="#1e1e1e"/><rect x="139" y="47.5" width="1" height="23.5" fill="#1e1e1e"/><rect x="169" y="47.5" width="1" height="23.5" fill="#1e1e1e"/><rect x="198" y="47.5" width="1" height="23.5" fill="#1e1e1e"/><rect x="228" y="47.5" width="1" height="23.5" fill="#1e1e1e"/><rect x="257" y="47.5" width="1" height="23.5" fill="#1e1e1e"/><rect x="287" y="47.5" width="1" height="23.5" fill="#1e1e1e"/><rect x="316" y="47.5" width="1" height="23.5" fill="#1e1e1e"/><rect x="345" y="47.5" width="1" height="23.5" fill="#1e1e1e"/><rect x="375" y="47.5" width="1" height="23.5" fill="#1e1e1e"/><rect x="404" y="47.5" width="1" height="23.5" fill="#1e1e1e"/><rect x="434" y="47.5" width="1" height="23.5" fill="#1e1e1e"/><rect x="463" y="47.5" width="1" height="23.5" fill="#1e1e1e"/><rect x="493" y="47.5" width="1" height="23.5" fill="#1e1e1e"/><rect x="522" y="47.5" width="1" height="23.5" fill="#1e1e1e"/><rect x="552" y="47.5" width="1" height="23.5" fill="#1e1e1e"/><rect x="581" y="47.5" width="1" height="23.5" fill="#1e1e1e"/><rect x="611" y="47.5" width="1" height="23.5" fill="#1e1e1e"/><rect x="640" y="47.5" width="1" height="23.5" fill="#1e1e1e"/><rect x="670" y="47.5" width="1" height="23.5" fill="#1e1e1e"/><rect x="699" y="47.5" width="1" height="23.5" fill="#1e1e1e"/><rect x="728" y="47.5" width="1" height="23.5" fill="#1e1e1e"/><rect x="758" y="47.5" width="1" height="23.5" fill="#1e1e1e"/><rect x="787" y="47.5" width="1" height="23.5" fill="#1e1e1e"/><rect x="817" y="47.5" width="1" height="23.5" fill="#1e1e1e"/><rect x="846" y="47.5" width="1" height="23.5" fill="#1e1e1e"/><rect x="876" y="47.5" width="1" height="23.5" fill="#1e1e1e"/><rect x="905" y="47.5" width="1" height="23.5" fill="#1e1e1e"/><rect x="935" y="47.5" width="1" height="23.5" fill="#1e1e1e"/><rect x="964" y="47.5" width="1" height="23.5" fill="#1e1e1e"/><rect x="994" y="47.5" width="1" height="23.5" fill="#1e1e1e"/><rect x="1023" y="47.5" width="1" height="23.5" fill="#1e1e1e"/><rect x="1053" y="47.5" width="1" height="23.5" fill="#1e1e1e"/><rect x="1082" y="47.5" width="1" height="23.5" fill="#1e1e1e"/><rect x="1112" y="47.5" width="1" height="23.5" fill="#1e1e1e"/><rect x="1141" y="47.5" width="1" height="23.5" fill="#1e1e1e"/><rect x="1170" y="47.5" width="1" height="23.5" fill="#1e1e1e"/><rect x="1200" y="47.5" width="1" height="23.5" fill="#1e1e1e"/><rect x="1229" y="47.5" width="1" height="23.5" fill="#1e1e1e"/><rect x="1259" y="47.5" width="1" height="23.5" fill="#1e1e1e"/><rect x="1288" y="47.5" width="1" height="23.5" fill="#1e1e1e"/><rect x="1318" y="47.5" width="1" height="23.5" fill="#1e1e1e"/><rect x="1347" y="47.5" width="1" height="23.5" fill="#1e1e1e"/><rect x="1377" y="47.5" width="1" height="23.5" fill="#1e1e1e"/><rect x="1406" y="47.5" width="1" height="23.5" fill="#1e1e1e"/><rect x="1436" y="47.5" width="1" height="23.5" fill="#1e1e1e"/><rect x="1465" y="47.5" width="1" height="23.5" fill="#1e1e1e"/><rect x="1495" y="47.5" width="1" height="23.5" fill="#1e1e1e"/><rect x="1524" y="47.5" width="1" height="23.5" fill="#101010"/><rect x="1554" y="47.5" width="1" height="23.5" fill="#1e1e1e"/><rect x="9" y="61" width="1564" height="8" rx="4" fill="#555555"/><circle cx="13.5" cy="65" r="3" fill="#3a3a3a"/><circle cx="1568.5" cy="65" r="3" fill="#3a3a3a"/></svg></div><div class="t" style="left:83.2px;top:969.8px;width:60px;text-align:center;font-size:12.2px;color:#b4b4b4">10</div><div class="t" style="left:142.0px;top:969.8px;width:60px;text-align:center;font-size:12.2px;color:#b4b4b4">20</div><div class="t" style="left:200.9px;top:969.8px;width:60px;text-align:center;font-size:12.2px;color:#b4b4b4">30</div><div class="t" style="left:259.7px;top:969.8px;width:60px;text-align:center;font-size:12.2px;color:#b4b4b4">40</div><div class="t" style="left:318.5px;top:969.8px;width:60px;text-align:center;font-size:12.2px;color:#b4b4b4">50</div><div class="t" style="left:377.3px;top:969.8px;width:60px;text-align:center;font-size:12.2px;color:#b4b4b4">60</div><div class="t" style="left:436.1px;top:969.8px;width:60px;text-align:center;font-size:12.2px;color:#b4b4b4">70</div><div class="t" style="left:495.0px;top:969.8px;width:60px;text-align:center;font-size:12.2px;color:#b4b4b4">80</div><div class="t" style="left:553.8px;top:969.8px;width:60px;text-align:center;font-size:12.2px;color:#b4b4b4">90</div><div class="t" style="left:612.3px;top:969.8px;width:60px;text-align:center;font-size:12.2px;color:#b4b4b4">100</div><div class="t" style="left:671.1px;top:969.8px;width:60px;text-align:center;font-size:12.2px;color:#b4b4b4">110</div><div class="t" style="left:729.9px;top:969.8px;width:60px;text-align:center;font-size:12.2px;color:#b4b4b4">120</div><div class="t" style="left:788.8px;top:969.8px;width:60px;text-align:center;font-size:12.2px;color:#b4b4b4">130</div><div class="t" style="left:847.6px;top:969.8px;width:60px;text-align:center;font-size:12.2px;color:#b4b4b4">140</div><div class="t" style="left:906.4px;top:969.8px;width:60px;text-align:center;font-size:12.2px;color:#b4b4b4">150</div><div class="t" style="left:965.2px;top:969.8px;width:60px;text-align:center;font-size:12.2px;color:#b4b4b4">160</div><div class="t" style="left:1024.0px;top:969.8px;width:60px;text-align:center;font-size:12.2px;color:#b4b4b4">170</div><div class="t" style="left:1082.9px;top:969.8px;width:60px;text-align:center;font-size:12.2px;color:#b4b4b4">180</div><div class="t" style="left:1141.7px;top:969.8px;width:60px;text-align:center;font-size:12.2px;color:#b4b4b4">190</div><div class="t" style="left:1200.5px;top:969.8px;width:60px;text-align:center;font-size:12.2px;color:#b4b4b4">200</div><div class="t" style="left:1259.3px;top:969.8px;width:60px;text-align:center;font-size:12.2px;color:#b4b4b4">210</div><div class="t" style="left:1318.1px;top:969.8px;width:60px;text-align:center;font-size:12.2px;color:#b4b4b4">220</div><div class="t" style="left:1377.0px;top:969.8px;width:60px;text-align:center;font-size:12.2px;color:#b4b4b4">230</div><div class="t" style="left:1435.8px;top:969.8px;width:60px;text-align:center;font-size:12.2px;color:#b4b4b4">240</div><div class="t" style="left:1494.6px;top:969.8px;width:60px;text-align:center;font-size:12.2px;color:#b4b4b4">250</div><div class="a" style="left:57.5px;top:983px;width:2px;height:26px;background:#4a7ac8"></div><div class="a" style="left:47px;top:966px;width:23.5px;height:17px;background:#4772b3;border-radius:5px;"></div><div class="t" style="left:47px;top:970px;width:23.5px;text-align:center;font-size:11.8px;color:#f0f0f0">1</div><div class="a" style="left:8.5px;top:941.3px;width:31px;height:18.5px;background:#282828;border-radius:4px;border:1px solid #3d3d3d;"></div><svg width="20" height="18" style="left:10px;top:941.3px"><circle cx="10" cy="9.6" r="7" fill="#e6e6e6"/><path d="M11.5,5.8 L8.5,9.6 L11.5,13.4" fill="none" stroke="#282828" stroke-width="1.6"/></svg><svg width="12" height="8" style="left:28px;top:947.2px"><path d="M2.5,2.2 L6,5.8 L9.5,2.2" fill="none" stroke="#d0d0d0" stroke-width="1.1"/></svg><div class="a" style="left:45.5px;top:941.3px;width:132px;height:18.5px;background:#282828;border-radius:4px;border:1px solid #3d3d3d;"></div><div class="a" style="left:116.5px;top:941.3px;width:1px;height:18.5px;background:#363636"></div><div class="t" style="left:53.3px;top:946.19px;font-size:12.33px;color:#dcdcdc;transform:scaleX(0.957);transform-origin:0 0;">Playback</div><svg width="12" height="8" style="left:104px;top:947.2px"><path d="M2.5,2.2 L6,5.8 L9.5,2.2" fill="none" stroke="#d0d0d0" stroke-width="1.1"/></svg><div class="t" style="left:124.3px;top:946.19px;font-size:12.33px;color:#dcdcdc;transform:scaleX(0.957);transform-origin:0 0;">Keying</div><svg width="12" height="8" style="left:165px;top:947.2px"><path d="M2.5,2.2 L6,5.8 L9.5,2.2" fill="none" stroke="#d0d0d0" stroke-width="1.1"/></svg><div class="t" style="left:187px;top:946.19px;font-size:12.33px;color:#dcdcdc;transform:scaleX(0.957);transform-origin:0 0;">View</div><div class="t" style="left:228px;top:946.19px;font-size:12.33px;color:#dcdcdc;transform:scaleX(0.957);transform-origin:0 0;">Marker</div><div class="a" style="left:700px;top:941.3px;width:38px;height:18.5px;background:#282828;border-radius:4px;border:1px solid #3d3d3d;"></div><div class="a" style="left:701px;top:942.3px;width:17.5px;height:16.5px;background:#4a4a4a;border-radius:3px 0 0 3px"></div><svg width="18" height="18" style="left:700.5px;top:941.3px"><circle cx="9" cy="9.6" r="5" fill="none" stroke="#d0d0d0" stroke-width="1.2"/></svg><svg width="12" height="8" style="left:722px;top:947.2px"><path d="M2.5,2.2 L6,5.8 L9.5,2.2" fill="none" stroke="#666" stroke-width="1.1"/></svg><div class="a" style="left:744.5px;top:941.3px;width:119px;height:18.5px;background:#545454;border-radius:4px;"></div><div class="a" style="left:764.3px;top:941.3px;width:1px;height:18.5px;background:#474747"></div><div class="a" style="left:784.2px;top:941.3px;width:1px;height:18.5px;background:#474747"></div><div class="a" style="left:804.0px;top:941.3px;width:1px;height:18.5px;background:#474747"></div><div class="a" style="left:823.8px;top:941.3px;width:1px;height:18.5px;background:#474747"></div><div class="a" style="left:843.6px;top:941.3px;width:1px;height:18.5px;background:#474747"></div><svg width="120" height="18" style="left:744.5px;top:941.3px" fill="#e6e6e6"><rect x="6" y="4.5" width="2" height="10.5"/><path d="M15.2,4.5 V15 L8.2,9.75 Z"/><path d="M21.5,9.75 L25.5,5.5 L29.5,9.75 L25.5,14 Z M36.8,4.8 V14.7 L30.3,9.75 Z"/><path d="M55,3.8 V15.8 L43.5,9.8 Z"/><path d="M64.3,3.8 V15.8 L74.8,9.8 Z"/><path d="M81.7,4.8 V14.7 L88,9.75 Z M88.2,9.75 L92.4,5.3 L96.6,9.75 L92.4,14.2 Z"/><path d="M105.5,4.5 V15 L112.8,9.75 Z"/><rect x="113.3" y="4.5" width="2" height="10.5"/></svg><div class="a" style="left:1303px;top:941.3px;width:73px;height:18.5px;background:#545454;border-radius:4px;"></div><div class="t" style="left:1303px;top:946.3px;width:73px;text-align:center;font-size:11.8px;color:#e6e6e6">1</div><div class="a" style="left:1382.5px;top:941.3px;width:194px;height:18.5px;background:#545454;border-radius:4px;"></div><div class="a" style="left:1382.5px;top:941.3px;width:19px;height:18.5px;background:#3d3d3d;border-radius:4px 0 0 4px"></div><div class="a" style="left:1490.5px;top:941.3px;width:1px;height:18.5px;background:#474747"></div><svg width="18" height="18" style="left:1383px;top:941.3px"><circle cx="9" cy="10.5" r="5" fill="none" stroke="#e0e0e0" stroke-width="1.1"/><path d="M9,7.5 V10.5 H11.5 M7,3.5 H11 M9,3.5 V5.5 M14,4.5 L15.5,6" stroke="#e0e0e0" stroke-width="1" fill="none"/></svg><div class="t" style="left:1417px;top:945.69px;font-size:12.33px;color:#e6e6e6;transform:scaleX(0.957);transform-origin:0 0;">Start</div><div class="t" style="left:1470px;top:945.69px;font-size:12.33px;color:#e6e6e6;transform:scaleX(0.957);transform-origin:0 0;">1</div><div class="t" style="left:1506px;top:945.69px;font-size:12.33px;color:#e6e6e6;transform:scaleX(0.957);transform-origin:0 0;">End</div><div class="t" style="left:1542.7px;top:945.69px;font-size:12.33px;color:#e6e6e6;transform:scaleX(0.957);transform-origin:0 0;">250</div><svg width="10" height="12" style="left:1574px;top:978.5px"><path d="M7,2 L3.5,6 L7,10" fill="none" stroke="#888" stroke-width="1.1"/></svg><svg width="10" height="12" style="left:0px;top:978.5px"><path d="M2.5,2 L6,6 L2.5,10" fill="none" stroke="#888" stroke-width="1.1"/></svg><div class="t" style="left:1882.7px;top:1016.39px;font-size:12.33px;color:#9a9a9a;transform:scaleX(0.957);transform-origin:0 0;">4.4.3</div>
<svg width="40" height="50" style="left:0;top:0"><g transform="translate(11,11.5) scale(1.0)"><path d="M-2.2,-3.6 L-3.0,-6.6 M-7.2,-3.4 L-1.2,-3.4 M-8.6,2.6 L-3.2,-1.6" fill="none" stroke="#f08a1c" stroke-width="2.1" stroke-linecap="round"/><circle cx="0" cy="0" r="4.2" fill="none" stroke="#f08a1c" stroke-width="2.6"/><circle cx="0" cy="0" r="2.9" fill="#ffffff"/><circle cx="0" cy="0" r="1.6" fill="#2a6ab0"/></g><g transform="translate(19.5,36) scale(1.05)"><path d="M-2.2,-3.6 L-3.0,-6.6 M-7.2,-3.4 L-1.2,-3.4 M-8.6,2.6 L-3.2,-1.6" fill="none" stroke="#d8d8d8" stroke-width="2.1" stroke-linecap="round"/><circle cx="0" cy="0" r="4.2" fill="none" stroke="#d8d8d8" stroke-width="2.6"/></g><circle cx="20.7" cy="36.5" r="1.6" fill="#d8d8d8"/></svg><div class="t" style="left:24px;top:5.90px;font-size:12.12px;color:#e6e6e6;transform:scaleX(0.957);transform-origin:0 0;">* (Unsaved) - Blender 4.4.3</div><svg width="120" height="22" style="left:1790px;top:0" fill="none" stroke="#e8e8e8" stroke-width="1"><line x1="9" y1="10.5" x2="19" y2="10.5"/><rect x="54.5" y="6.5" width="8" height="8" rx="1.5"/><path d="M56.5,4.5 h5 a2,2 0 0 1 2,2 v5"/><path d="M100,5 L110,15 M110,5 L100,15"/></svg><div class="t" style="left:35.2px;top:30.89px;font-size:12.33px;color:#d0d0d0;transform:scaleX(0.957);transform-origin:0 0;">File</div><div class="t" style="left:69.2px;top:30.89px;font-size:12.33px;color:#d0d0d0;transform:scaleX(0.957);transform-origin:0 0;">Edit</div><div class="t" style="left:105.2px;top:30.89px;font-size:12.33px;color:#d0d0d0;transform:scaleX(0.957);transform-origin:0 0;">Render</div><div class="t" style="left:157px;top:30.89px;font-size:12.33px;color:#d0d0d0;transform:scaleX(0.957);transform-origin:0 0;">Window</div><div class="t" style="left:216.4px;top:30.89px;font-size:12.33px;color:#d0d0d0;transform:scaleX(0.957);transform-origin:0 0;">Help</div><div class="a" style="left:265px;top:29px;width:54px;height:21px;background:#303030;border-radius:4px 4px 0 0"></div><div class="t" style="left:274px;top:33.69px;font-size:12.33px;color:#e8e8e8;transform:scaleX(0.957);transform-origin:0 0;">Layout</div><div class="t" style="left:330.3px;top:33.69px;font-size:12.33px;color:#a8a8a8;transform:scaleX(0.957);transform-origin:0 0;">Modeling</div><div class="t" style="left:400.3px;top:33.69px;font-size:12.33px;color:#a8a8a8;transform:scaleX(0.957);transform-origin:0 0;">Sculpting</div><div class="t" style="left:471.4px;top:33.69px;font-size:12.33px;color:#a8a8a8;transform:scaleX(0.957);transform-origin:0 0;">UV Editing</div><div class="t" style="left:548.4px;top:33.69px;font-size:12.33px;color:#a8a8a8;transform:scaleX(0.957);transform-origin:0 0;">Texture Paint</div><div class="t" style="left:638px;top:33.69px;font-size:12.33px;color:#a8a8a8;transform:scaleX(0.957);transform-origin:0 0;">Shading</div><div class="t" style="left:701.8px;top:33.69px;font-size:12.33px;color:#a8a8a8;transform:scaleX(0.957);transform-origin:0 0;">Animation</div><div class="t" style="left:777.2px;top:33.69px;font-size:12.33px;color:#a8a8a8;transform:scaleX(0.957);transform-origin:0 0;">Rendering</div><div class="t" style="left:851px;top:33.69px;font-size:12.33px;color:#a8a8a8;transform:scaleX(0.957);transform-origin:0 0;">Compositing</div><div class="t" style="left:940px;top:33.69px;font-size:12.33px;color:#a8a8a8;transform:scaleX(0.957);transform-origin:0 0;">Geometry Nodes</div><div class="t" style="left:1048.2px;top:33.69px;font-size:12.33px;color:#a8a8a8;transform:scaleX(0.957);transform-origin:0 0;">Scripting</div><svg width="14" height="14" style="left:1109px;top:31px"><path d="M7,1.5 V11.5 M2,6.5 H12" stroke="#c8c8c8" stroke-width="1.1"/></svg>
<div class="a" style="left:1px;top:50px;width:1582px;height:885px;border:1px solid rgba(255,255,255,0.075);border-radius:6px"></div>
<div class="a" style="left:1px;top:938px;width:1582px;height:71px;border:1px solid rgba(255,255,255,0.075);border-radius:6px"></div>
<div class="a" style="left:1586px;top:50px;width:333px;height:307px;border:1px solid rgba(255,255,255,0.075);border-radius:6px"></div>
<div class="a" style="left:1586px;top:360px;width:333px;height:649px;border:1px solid rgba(255,255,255,0.075);border-radius:6px"></div>
</body></html>
